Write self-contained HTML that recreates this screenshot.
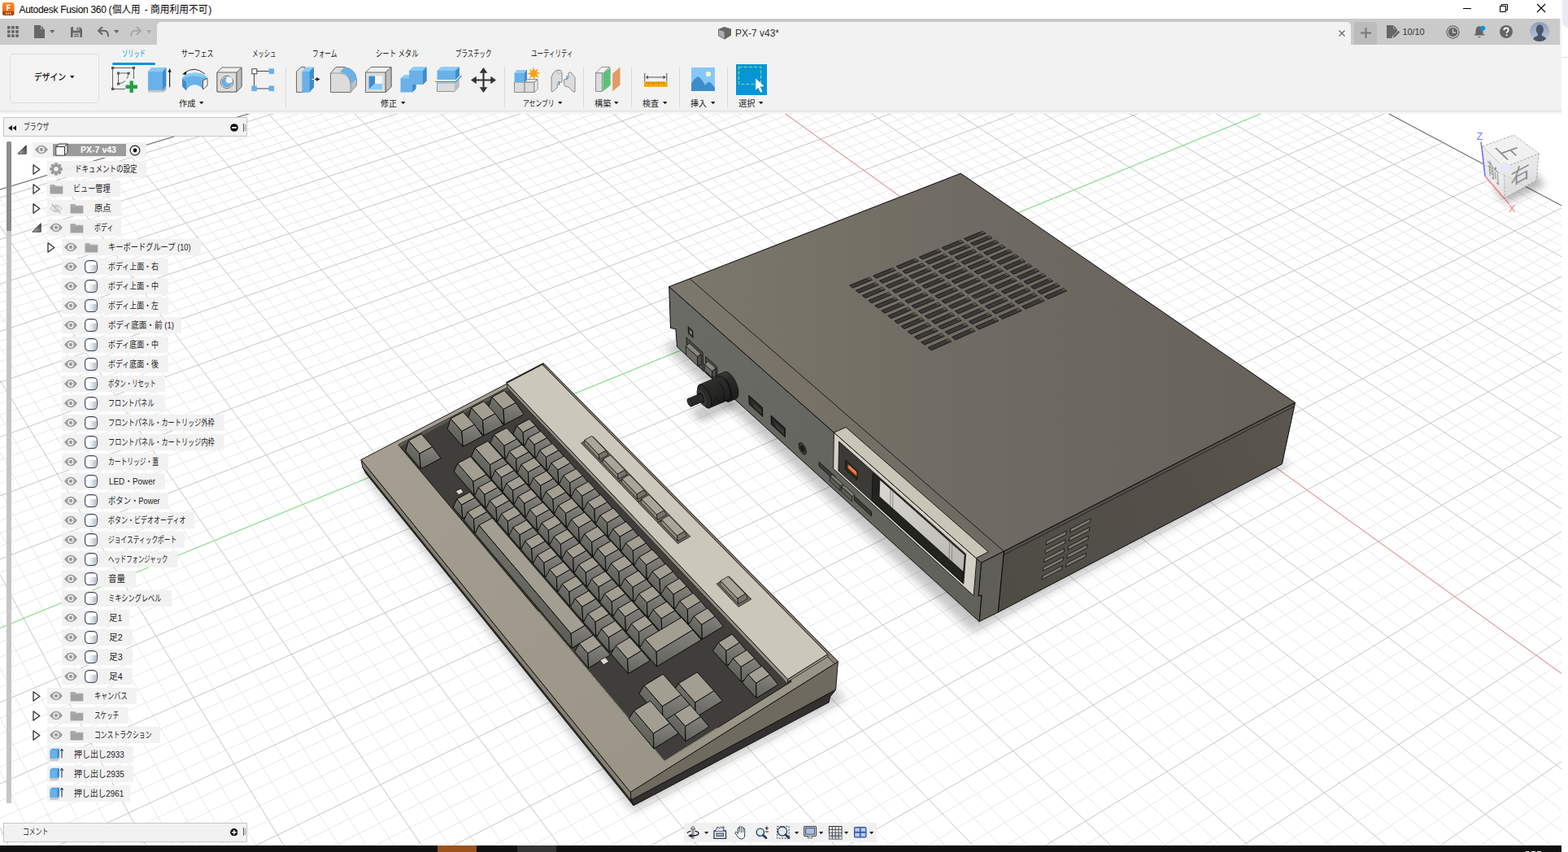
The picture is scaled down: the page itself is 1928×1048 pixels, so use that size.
<!DOCTYPE html><html lang="ja"><head><meta charset="utf-8"><title>Autodesk Fusion 360</title><style>
*{box-sizing:border-box}
html,body{margin:0;padding:0}
body{width:1928px;height:1048px;position:relative;overflow:hidden;background:#fff;font-family:"Liberation Sans","Noto Sans CJK JP",sans-serif;font-size:12px;color:#222}
#app div,#app svg,#app span{position:absolute}
#app{position:absolute;left:0;top:0;width:1928px;height:1048px;overflow:hidden}
.t{white-space:nowrap;line-height:1}
.row{background:rgba(241,241,241,.93)}
.sep{width:1px;background:#d9d9d9}
svg.tx{overflow:visible}
svg.tx text, svg text.cj{font-family:"Liberation Sans","Noto Sans CJK JP",sans-serif}
</style></head><body><div id="app"><div style="left:0px;top:0px;width:1920px;height:23px;background:#fff"></div><svg style="left:3px;top:3px" width="14.5" height="16" viewBox="0 0 14.5 16"><defs><linearGradient id="gfi" x1="0" y1="0" x2="0" y2="1"><stop offset="0" stop-color="#ff8a2b"/><stop offset="1" stop-color="#f26a16"/></linearGradient></defs><path d="M2.5 0 H11.5 Q14.5 0 14.5 3 V11 H0 V2.5 Q0 0 2.5 0Z" fill="url(#gfi)"/><path d="M0 11 H14.5 V14 Q14.5 16 12.5 16 H2 Q0 16 0 14Z" fill="#a4480f"/><path d="M5 2.8 H9.8 V4.3 H6.8 V6 H9.3 V7.5 H6.8 V10 H5Z" fill="#fff"/><path d="M4 12.6h1.6v1.8H4z M6.5 12.6h1.6v1.8H6.5z M9 12.6h1.6v1.8H9z" fill="#f5c9a8"/></svg><span class="t" style="left:23.5px;top:5.8px;font-size:12px;color:#000;letter-spacing:-0.3px" id="ttl">Autodesk Fusion 360</span><span class="t" style="left:133.6px;top:5.8px;font-size:12px;color:#000" id="ttl2">(</span><svg class="tx" style="left:138.3px;top:2.3px" width="37" height="20" fill="#000"><text x="0" y="14" font-size="12" textLength="34.5" lengthAdjust="spacingAndGlyphs">個人用</text></svg><span class="t" style="left:177.7px;top:5.8px;font-size:12px;color:#000">-</span><svg class="tx" style="left:185.2px;top:2.3px" width="73" height="20" fill="#000"><text x="0" y="14" font-size="12" textLength="70.4" lengthAdjust="spacingAndGlyphs">商用利用不可</text></svg><span class="t" style="left:256.3px;top:5.8px;font-size:12px;color:#000">)</span><svg style="left:1798px;top:4px" width="12" height="12" viewBox="0 0 12 12"><path d="M1 6.5H11" stroke="#000" stroke-width="1"/></svg><svg style="left:1843px;top:4px" width="12" height="12" viewBox="0 0 12 12"><path d="M1.5 3.5H8.5V10.5H1.5Z M3.5 3.5V1.5H10.5V8.5H8.5" fill="none" stroke="#000" stroke-width="1"/></svg><svg style="left:1889px;top:4px" width="12" height="12" viewBox="0 0 12 12"><path d="M1 1L11 11M11 1L1 11" stroke="#000" stroke-width="1.1"/></svg><div style="left:0px;top:23px;width:1918px;height:32px;background:#cacaca"></div><div style="left:1918px;top:23px;width:2px;height:32px;background:#f0f0f0"></div><div style="left:193px;top:27px;width:1468px;height:28px;background:#f2f2f2;border-radius:5px 5px 0 0"></div><svg style="left:9px;top:32px" width="14" height="14" viewBox="0 0 14 14"><rect x="0" y="0" width="3.6" height="3.6" fill="#666"/><rect x="0" y="5.1" width="3.6" height="3.6" fill="#666"/><rect x="0" y="10.2" width="3.6" height="3.6" fill="#666"/><rect x="5.1" y="0" width="3.6" height="3.6" fill="#666"/><rect x="5.1" y="5.1" width="3.6" height="3.6" fill="#666"/><rect x="5.1" y="10.2" width="3.6" height="3.6" fill="#666"/><rect x="10.2" y="0" width="3.6" height="3.6" fill="#666"/><rect x="10.2" y="5.1" width="3.6" height="3.6" fill="#666"/><rect x="10.2" y="10.2" width="3.6" height="3.6" fill="#666"/></svg><svg style="left:42px;top:31px" width="13" height="16" viewBox="0 0 13 16"><path d="M0 0H8L13 5V16H0Z" fill="#666"/><path d="M8 0V5H13" fill="#cacaca"/><path d="M8.6 0.8V4.4H12.2Z" fill="#666"/></svg><svg style="left:61px;top:36.5px" width="6.5" height="4" viewBox="0 0 6.5 4"><path d="M0 0H6.5 L3.25 4 Z" fill="#666"/></svg><svg style="left:87px;top:32.5px" width="14" height="13.5" viewBox="0 0 14 13.5"><path d="M0 1.5Q0 0 1.5 0H11L14 3V12Q14 13.5 12.5 13.5H1.5Q0 13.5 0 12Z" fill="#666"/><rect x="3" y="0" width="7.5" height="4.6" fill="#cacaca"/><rect x="7.6" y="0.7" width="1.8" height="3.2" fill="#666"/><rect x="2.6" y="7.4" width="8.8" height="6.1" fill="#cacaca"/><rect x="4" y="8.8" width="6" height="1.2" fill="#666"/><rect x="4" y="11" width="6" height="1.2" fill="#666"/></svg><svg style="left:119.5px;top:32.5px" width="14" height="12.5" viewBox="0 0 14 12.5"><path d="M5.5 0.5 L1 4.8 L5.5 9" fill="none" stroke="#666" stroke-width="1.9" stroke-linejoin="round" stroke-linecap="round"/><path d="M1.5 4.8 H8 Q13 4.8 13 11.5" fill="none" stroke="#666" stroke-width="1.9" stroke-linecap="round"/></svg><svg style="left:140px;top:36.5px" width="6.5" height="4" viewBox="0 0 6.5 4"><path d="M0 0H6.5 L3.25 4 Z" fill="#666"/></svg><svg style="left:159.5px;top:32.5px" width="14" height="12.5" viewBox="0 0 14 12.5"><path d="M8.5 0.5 L13 4.8 L8.5 9" fill="none" stroke="#a6a6a6" stroke-width="1.9" stroke-linejoin="round" stroke-linecap="round"/><path d="M12.5 4.8 H6 Q1 4.8 1 11.5" fill="none" stroke="#a6a6a6" stroke-width="1.9" stroke-linecap="round"/></svg><svg style="left:179.5px;top:36.5px" width="6.5" height="4" viewBox="0 0 6.5 4"><path d="M0 0H6.5 L3.25 4 Z" fill="#a6a6a6"/></svg><svg style="left:883px;top:33px" width="16" height="15.5" viewBox="0 0 16 15.5"><path d="M0 3 L7.5 0 L16 2.5 V10.5 L8 15.5 L0 11Z" fill="#666"/><path d="M0.8 3.8 L7.6 6 V14.2 L0.8 10.5Z" fill="#aeaeae"/></svg><span class="t" id="doct" style="left:904px;top:35px;font-size:12px;color:#333">PX-7 v43*</span><svg style="left:1646px;top:37px" width="8" height="8" viewBox="0 0 8 8"><path d="M0.5 0.5L7.5 7.5M7.5 0.5L0.5 7.5" stroke="#666" stroke-width="1.2"/></svg><div style="left:1665px;top:27px;width:28px;height:28px;background:#bcbcbc;border-radius:4px 4px 0 0"></div><svg style="left:1673px;top:34px" width="13" height="13" viewBox="0 0 13 13"><path d="M6.5 0V13M0 6.5H13" stroke="#777" stroke-width="2"/></svg><svg style="left:1705px;top:31px" width="17" height="16" viewBox="0 0 17 16"><path d="M0 0H8.5L13 4.5V7.5L6.5 14.2V16H0Z" fill="#666"/><path d="M8.5 0V4.5H13" fill="#cacaca"/><path d="M9.2 0.9V3.9H12.2Z" fill="#666"/><path d="M7.6 15.8 L8.3 12.6 L14.4 6.4 L16.6 8.6 L10.5 14.8Z" fill="#666" stroke="#cacaca" stroke-width="0.6"/></svg><span class="t" id="jobs" style="left:1724.5px;top:34px;font-size:11px;color:#333;letter-spacing:-0.1px">10/10</span><svg style="left:1777.5px;top:30.5px" width="17" height="17" viewBox="0 0 17 17"><circle cx="8.5" cy="8.5" r="7.6" fill="none" stroke="#666" stroke-width="1.1"/><circle cx="8.5" cy="8.5" r="5.8" fill="#666"/><path d="M8.5 4.5V9H12" fill="none" stroke="#cacaca" stroke-width="1.3"/></svg><svg style="left:1812px;top:31px" width="15" height="16.5" viewBox="0 0 15 16.5"><path d="M7 1.2 Q11.5 1.8 11.5 7 V10 L13.8 12.6 H0.2 L2.5 10 V7 Q2.5 1.8 7 1.2Z" fill="#666"/><path d="M5 14 H9 Q7 16.5 5 14Z" fill="#666"/><circle cx="11.2" cy="3.8" r="3" fill="#0696d7"/></svg><svg style="left:1844px;top:31px" width="16" height="16" viewBox="0 0 16 16"><circle cx="8" cy="8" r="8" fill="#666"/><path d="M5.3 6.2 Q5.3 3.4 8 3.4 Q10.7 3.4 10.7 5.9 Q10.7 7.3 9.2 8.2 Q8.6 8.6 8.6 9.8" fill="none" stroke="#fff" stroke-width="1.7"/><circle cx="8.6" cy="12.2" r="1.05" fill="#fff"/></svg><svg style="left:1881px;top:27px" width="24" height="24" viewBox="0 0 24 24"><defs><linearGradient id="gav" x1="0" y1="0" x2="0" y2="1"><stop offset="0" stop-color="#8c9ebb"/><stop offset="1" stop-color="#bcc8da"/></linearGradient><clipPath id="cav"><circle cx="12" cy="12" r="12"/></clipPath></defs><circle cx="12" cy="12" r="12" fill="url(#gav)"/><g clip-path="url(#cav)" fill="#4a5568"><ellipse cx="12.3" cy="9.2" rx="4.6" ry="6"/><path d="M9.8 13 H14.8 V17 Q20 18 21.5 24 H2.5 Q4.5 18 9.8 17Z"/></g></svg><div style="left:0px;top:55px;width:1920px;height:82px;background:#f2f2f2"></div><div style="left:12px;top:65.5px;width:109.5px;height:61px;border:1px solid #dcdcdc;border-radius:5px;background:#f3f3f3"></div><svg class="tx" style="left:42px;top:86.3px" width="42" height="19" fill="#111"><text x="0" y="13" font-size="11.5" font-weight="500" textLength="39" lengthAdjust="spacingAndGlyphs">デザイン</text></svg><svg style="left:86px;top:93px" width="5.5" height="3.5" viewBox="0 0 5.5 3.5"><path d="M0 0H5.5 L2.75 3.5 Z" fill="#222"/></svg><svg class="tx" style="left:149.6px;top:57.3px" width="31" height="18" fill="#0c94d6"><text x="0" y="13" font-size="11" textLength="28.8" lengthAdjust="spacingAndGlyphs">ソリッド</text></svg><div style="left:138.2px;top:76.6px;width:52.4px;height:3px;background:#0696d7;border-radius:1.5px"></div><svg class="tx" style="left:222.8px;top:57.3px" width="42" height="18" fill="#222"><text x="0" y="13" font-size="11" textLength="39.5" lengthAdjust="spacingAndGlyphs">サーフェス</text></svg><svg class="tx" style="left:310px;top:57.3px" width="32" height="18" fill="#222"><text x="0" y="13" font-size="11" textLength="29.5" lengthAdjust="spacingAndGlyphs">メッシュ</text></svg><svg class="tx" style="left:383.6px;top:57.3px" width="33" height="18" fill="#222"><text x="0" y="13" font-size="11" textLength="30.5" lengthAdjust="spacingAndGlyphs">フォーム</text></svg><svg class="tx" style="left:461.6px;top:57.3px" width="55" height="18" fill="#222"><text x="0" y="13" font-size="11" textLength="52.5" lengthAdjust="spacingAndGlyphs">シート メタル</text></svg><svg class="tx" style="left:559.7px;top:57.3px" width="47" height="18" fill="#222"><text x="0" y="13" font-size="11" textLength="44.5" lengthAdjust="spacingAndGlyphs">プラスチック</text></svg><svg class="tx" style="left:653px;top:57.3px" width="54" height="18" fill="#222"><text x="0" y="13" font-size="11" textLength="51.5" lengthAdjust="spacingAndGlyphs">ユーティリティ</text></svg><svg style="left:137px;top:82px" width="32" height="32" viewBox="0 0 32 32"><rect x="1.5" y="1.5" width="26" height="26" fill="none" stroke="#555" stroke-width="0.9"/><g fill="#555"><rect x="0" y="0" width="3.2" height="3.2"/><rect x="25.8" y="0" width="3.2" height="3.2"/><rect x="0" y="25.8" width="3.2" height="3.2"/></g><path d="M8.5 8 H21 Q20 20 8.5 21 Z" fill="none" stroke="#555" stroke-width="0.9"/><g fill="#555"><rect x="7" y="6.6" width="3" height="3"/><rect x="19.6" y="6.6" width="3" height="3"/><rect x="7" y="19.6" width="3" height="3"/></g><rect x="17" y="15" width="15" height="17" fill="#f2f2f2"/><path d="M22.5 17.5 h4.4 v5 h5 v4.4 h-5 v5 h-4.4 v-5 h-5 v-4.4 h5z" fill="#23a045"/></svg><svg style="left:181px;top:82px" width="31" height="32" viewBox="0 0 32 32"><path d="M1 28 L5 24.5 H24 V28.5 L20 32 H1Z" fill="#c4c4c4"/><path d="M20 28.5 L24 24.5 V28.5 L20 32Z" fill="#a9a9a9"/><path d="M1 6 L5.5 0.5 H24 V24 L19.5 29 H1Z" fill="#69b1e8"/><path d="M1 6 H19.5 V29 H1Z" fill="#69b1e8"/><path d="M19.5 6 L24 0.5 V24 L19.5 29Z" fill="#3f8ccb"/><path d="M1 6 L5.5 0.5 H24 L19.5 6Z" fill="#8accf7"/><path d="M28.5 4 V25.5" stroke="#222" stroke-width="1.2"/><path d="M26.3 6.5 L28.5 1.5 L30.7 6.5Z" fill="#222"/></svg><svg style="left:222.5px;top:83.5px" width="33" height="28" viewBox="0 0 33 28"><path d="M3 6 Q16 -4 29 7" fill="none" stroke="#333" stroke-width="1"/><path d="M1 7.5 L6.5 3.5 L6 8Z" fill="#222"/><path d="M1 13 Q3 6 16 5.5 Q29 6 32 12 L27 26 Q21 19 14 20.5 Q8 22 6 27.5 L1 22Z" fill="#69b1e8"/><path d="M1 13 Q9 9 16 9.5 Q24 10 32 12 Q29 6 16 5.5 Q3 6 1 13Z" fill="#8accf7"/><path d="M1 13 L1 22 L6 27.5 L6 17Z" fill="#3f8ccb"/><path d="M26.5 15 L32 12.5 V21 L26.5 26Z" fill="#fff" stroke="#555" stroke-width="1" stroke-linejoin="round"/></svg><svg style="left:266px;top:82px" width="32" height="32" viewBox="0 0 32 32"><path d="M1 7 L7 1 H31 V25 L25 31 H1Z" fill="#f0f0f0" stroke="#6a6a6a" stroke-width="1" stroke-linejoin="round"/><path d="M1 7 H25 V31 H1Z" fill="#dcdcdc" stroke="#6a6a6a" stroke-width="1"/><path d="M25 7 L31 1 V25 L25 31Z" fill="#bdbdbd" stroke="#6a6a6a" stroke-width="1" stroke-linejoin="round"/><circle cx="13" cy="19" r="7.6" fill="#f4f4f4" stroke="#6a6a6a" stroke-width="1"/><circle cx="13" cy="19" r="5.8" fill="#69b1e8" stroke="#3f78ae" stroke-width="0.8"/><circle cx="15.6" cy="16.4" r="3.9" fill="#eef6fc"/></svg><svg style="left:309px;top:84px" width="28.5" height="28.5" viewBox="0 0 28.5 28.5"><path d="M3.5 5 V25 M3.5 3.5 H25 M3.5 25 H25" stroke="#444" stroke-width="1" fill="none"/><rect x="0.8" y="0.8" width="6" height="6" fill="#fff" stroke="#444" stroke-width="1"/><rect x="21.5" y="0.3" width="6.6" height="6.6" fill="#69b1e8"/><rect x="0.3" y="21.5" width="6.6" height="6.6" fill="#69b1e8"/><rect x="21.5" y="21.5" width="6.6" height="6.6" fill="#69b1e8"/></svg><svg style="left:364px;top:82px" width="30" height="32" viewBox="0 0 30 32"><path d="M0.5 6 L6 0.5 H11 V31.5 H0.5Z" fill="#dcdcdc" stroke="#6a6a6a" stroke-width="1" stroke-linejoin="round"/><path d="M7.5 6 L13 0.5 H22 V25.5 L16.5 31.5 H7.5Z" fill="#8accf7"/><path d="M7.5 6 H16.5 V31.5 H7.5Z" fill="#69b1e8"/><path d="M16.5 6 L22 0.5 V25.5 L16.5 31.5Z" fill="#3f8ccb"/><path d="M20 15.5 H27" stroke="#222" stroke-width="1.2"/><path d="M25 13 L29.5 15.5 L25 18Z" fill="#222"/><path d="M19.5 15.5H23" stroke="#fff" stroke-width="1.2"/></svg><svg style="left:405.5px;top:82px" width="33" height="32" viewBox="0 0 33 32"><path d="M0.5 8 L7 0.5 H17 Q32 3 32.5 17 V23 L25 31.5 H0.5Z" fill="#dcdcdc" stroke="#6a6a6a" stroke-width="1" stroke-linejoin="round"/><path d="M25 31.5 L32.5 23 V17 L25 22Z" fill="#bdbdbd"/><path d="M12 7 Q24 8 25 22 L32.5 15.5 Q31 2 17.5 0.5Z" fill="#69b1e8"/><path d="M0.5 8 H12 Q24 8.5 25 22 V31.5" fill="none" stroke="#8a8a8a" stroke-width="0.8"/></svg><svg style="left:449px;top:82px" width="32.5" height="32" viewBox="0 0 32.5 32"><path d="M0.5 7 L7 0.5 H32 V25 L25 31.5 H0.5Z" fill="#f0f0f0" stroke="#6a6a6a" stroke-width="1" stroke-linejoin="round"/><path d="M25 7 L32 0.5 V25 L25 31.5Z" fill="#bdbdbd" stroke="#6a6a6a" stroke-width="1" stroke-linejoin="round"/><path d="M0.5 7 H25 V31.5 H0.5Z" fill="#dcdcdc" stroke="#6a6a6a" stroke-width="1"/><rect x="4.5" y="11.5" width="16.5" height="16.5" fill="#f6f6f6"/><path d="M4.5 11.5 H12 V21 L4.5 28Z" fill="#3f8ccb"/><path d="M12 21 H21 V28 H4.5Z" fill="#8accf7"/></svg><svg style="left:491.5px;top:82px" width="33" height="32" viewBox="0 0 33 32"><path d="M11 5 L16 0.5 H32.5 V17.5 L28 22 H19.5 V27 L15 31.5 H0.5 V14.5 L5 10.5 H11Z" fill="#69b1e8"/><path d="M11 5 L16 0.5 H32.5 L28 5Z" fill="#8accf7"/><path d="M0.5 14.5 L5 10.5 H11 V14.5Z" fill="#8accf7"/><path d="M28 5 L32.5 0.5 V17.5 L28 22Z" fill="#3f8ccb"/><path d="M15 22 H19.5 V27 L15 31.5Z" fill="#3f8ccb"/></svg><svg style="left:535px;top:82px" width="33" height="31" viewBox="0 0 33 31"><path d="M2.5 20 H24 L29 15.5 V25 L24 30.5 H2.5Z" fill="#dcdcdc" stroke="#8a8a8a" stroke-width="0.9" stroke-linejoin="round"/><path d="M24 20 L29 15.5 V25 L24 30.5Z" fill="#bdbdbd"/><path d="M2.5 5 L7.5 0.5 H30 V11 L25 16 H2.5Z" fill="#69b1e8"/><path d="M2.5 5 L7.5 0.5 H30 L25 5Z" fill="#8accf7"/><path d="M25 5 L30 0.5 V11 L25 16Z" fill="#3f8ccb"/><path d="M0 18.5 H25.5 L32.5 11" fill="none" stroke="#2b8fe0" stroke-width="1.1"/></svg><svg style="left:578.5px;top:82.5px" width="31" height="31" viewBox="0 0 32 32"><path d="M16 3 V29 M3 16 H29" stroke="#333" stroke-width="2.2"/><path d="M16 0 L21 7 H11Z M16 32 L21 25 H11Z M0 16 L7 11 V21Z M32 16 L25 11 V21Z" fill="#333"/></svg><svg style="left:632px;top:82px" width="33" height="32" viewBox="0 0 33 32"><path d="M0.5 19 H13 V31.5 H0.5Z" fill="#dcdcdc" stroke="#8a8a8a" stroke-width="1"/><path d="M13 19 H25 V31.5 H13Z" fill="#dcdcdc" stroke="#8a8a8a" stroke-width="1"/><path d="M13 19 L17 15.5 H29 L25 19Z M25 19 L29 15.5 V27.5 L25 31.5Z" fill="#f0f0f0" stroke="#8a8a8a" stroke-width="1" stroke-linejoin="round"/><path d="M0.5 8 L4 4 H16 V15.5 L13 19 H0.5Z" fill="#69b1e8"/><path d="M0.5 8 L4 4 H16 L13 8Z" fill="#8accf7"/><path d="M13 8 L16 4 V15.5 L13 19Z" fill="#3f8ccb"/><path d="M24 0 L25.6 5 L30 2.2 L27.8 6.8 L32.8 7.8 L28 9.6 L30.8 13.8 L26 11.8 L24.8 16.8 L23.2 12 L18.8 14.5 L21 10 L16 8.5 L21 7 L18.5 2.8 L22.8 5Z" fill="#f5a30e"/></svg><svg style="left:676.5px;top:84px" width="31" height="30" viewBox="0 0 31 30"><path d="M1 11 Q4 2 10 2 Q14 2 14 6 V17 L9 17.5 L8 24 L2 29 Q0.5 29 1 26Z" fill="#dcdcdc" stroke="#8a8a8a" stroke-width="1" stroke-linejoin="round"/><ellipse cx="11" cy="4.5" rx="2.6" ry="1.6" fill="#f8f8f8" stroke="#8a8a8a" stroke-width="0.7"/><path d="M22 6 Q23 4 25 5 L30 11 V28 Q30 30 28 29 L22 23 L18 22 Q16 21 16.5 14 L22 12Z" fill="#dcdcdc" stroke="#8a8a8a" stroke-width="1" stroke-linejoin="round"/><path d="M10.5 16 V21 M20 9 V14" stroke="#1e90e6" stroke-width="1.1"/></svg><svg style="left:732px;top:82px" width="31" height="31" viewBox="0 0 31.5 31.5"><path d="M0.5 8 L8 0.5 H18 L10 8Z" fill="#f4f4f4" stroke="#8a8a8a" stroke-width="1" stroke-linejoin="round"/><path d="M0.5 8 H8.5 V31 H0.5Z" fill="#dcdcdc" stroke="#8a8a8a" stroke-width="1"/><path d="M9.5 9 L19 1 V23 L9.5 31Z" fill="#58c17c"/><path d="M21.5 9 L31 0.5 V22.5 L21.5 31Z" fill="#e39a65"/></svg><svg style="left:792px;top:89.5px" width="28.5" height="17" viewBox="0 0 28.5 17"><path d="M0.7 0 V10 M27.8 0 V10" stroke="#555" stroke-width="1"/><path d="M3 5 H26" stroke="#555" stroke-width="1"/><path d="M1.5 5 L5 2.8 V7.2Z M27 5 L23.5 2.8 V7.2Z" fill="#555"/><rect x="0" y="10.5" width="28.5" height="6.3" fill="#f7a400"/><path d="M3 10.5v2 M6 10.5v3 M9 10.5v2 M12 10.5v3 M15 10.5v2 M18 10.5v3 M21 10.5v2 M24 10.5v3" stroke="#a86a00" stroke-width="0.8"/></svg><svg style="left:850px;top:83px" width="29" height="29" viewBox="0 0 29 29"><rect x="0" y="0" width="29" height="29" fill="#86c8f7"/><circle cx="21" cy="8" r="3.1" fill="#fbf7c2"/><path d="M0 20 Q7 8 11 13 Q14 16 17 22 Q21 16 24 19 Q27 22 29 25 V29 H0Z" fill="#3f8ccb"/></svg><svg style="left:905px;top:79px" width="38" height="38" viewBox="0 0 38 38"><rect x="0" y="0" width="38" height="38" fill="#0696d7"/><rect x="3.5" y="3.5" width="27" height="21" fill="none" stroke="#86e08a" stroke-width="1.1" stroke-dasharray="4 2.2"/><path d="M24.2 17.5 L34.5 27 L29.7 27.7 L32.5 33.5 L30 34.7 L27.2 28.8 L24.2 31.8Z" fill="#fff"/></svg><div class="sep" style="left:351px;top:82px;width:1px;height:50px;"></div><div class="sep" style="left:620px;top:82px;width:1px;height:50px;"></div><div class="sep" style="left:717px;top:82px;width:1px;height:50px;"></div><div class="sep" style="left:776px;top:82px;width:1px;height:50px;"></div><div class="sep" style="left:835px;top:82px;width:1px;height:50px;"></div><div class="sep" style="left:894px;top:82px;width:1px;height:50px;"></div><svg class="tx" style="left:220px;top:118.6px" width="23" height="17" fill="#222"><text x="0" y="12" font-size="10.5" textLength="20.5" lengthAdjust="spacingAndGlyphs">作成</text></svg><svg style="left:244.5px;top:124.7px" width="5.5" height="3.3" viewBox="0 0 5.5 3.3"><path d="M0 0H5.5 L2.75 3.3 Z" fill="#222"/></svg><svg class="tx" style="left:468px;top:118.6px" width="23" height="17" fill="#222"><text x="0" y="12" font-size="10.5" textLength="20" lengthAdjust="spacingAndGlyphs">修正</text></svg><svg style="left:492.5px;top:124.7px" width="5.5" height="3.3" viewBox="0 0 5.5 3.3"><path d="M0 0H5.5 L2.75 3.3 Z" fill="#222"/></svg><svg class="tx" style="left:643px;top:118.6px" width="41" height="17" fill="#222"><text x="0" y="12" font-size="10.5" textLength="38.5" lengthAdjust="spacingAndGlyphs">アセンブリ</text></svg><svg style="left:685.5px;top:124.7px" width="5.5" height="3.3" viewBox="0 0 5.5 3.3"><path d="M0 0H5.5 L2.75 3.3 Z" fill="#222"/></svg><svg class="tx" style="left:731px;top:118.6px" width="23" height="17" fill="#222"><text x="0" y="12" font-size="10.5" textLength="20.5" lengthAdjust="spacingAndGlyphs">構築</text></svg><svg style="left:755px;top:124.7px" width="5.5" height="3.3" viewBox="0 0 5.5 3.3"><path d="M0 0H5.5 L2.75 3.3 Z" fill="#222"/></svg><svg class="tx" style="left:790px;top:118.6px" width="23" height="17" fill="#222"><text x="0" y="12" font-size="10.5" textLength="20" lengthAdjust="spacingAndGlyphs">検査</text></svg><svg style="left:814.5px;top:124.7px" width="5.5" height="3.3" viewBox="0 0 5.5 3.3"><path d="M0 0H5.5 L2.75 3.3 Z" fill="#222"/></svg><svg class="tx" style="left:849px;top:118.6px" width="23" height="17" fill="#222"><text x="0" y="12" font-size="10.5" textLength="20" lengthAdjust="spacingAndGlyphs">挿入</text></svg><svg style="left:873.5px;top:124.7px" width="5.5" height="3.3" viewBox="0 0 5.5 3.3"><path d="M0 0H5.5 L2.75 3.3 Z" fill="#222"/></svg><svg class="tx" style="left:907.5px;top:118.6px" width="23" height="17" fill="#222"><text x="0" y="12" font-size="10.5" textLength="20.5" lengthAdjust="spacingAndGlyphs">選択</text></svg><svg style="left:932.5px;top:124.7px" width="5.5" height="3.3" viewBox="0 0 5.5 3.3"><path d="M0 0H5.5 L2.75 3.3 Z" fill="#222"/></svg><svg width="1920" height="904" viewBox="0 137 1920 904" style="position:absolute;left:0;top:137px;display:block" shape-rendering="geometricPrecision"><defs><linearGradient id="gtop" gradientUnits="userSpaceOnUse" x1="830" y1="420" x2="1560" y2="420"><stop offset="0" stop-color="#7d786d"/><stop offset="0.45" stop-color="#706c63"/><stop offset="1" stop-color="#67635b"/></linearGradient><linearGradient id="gright" gradientUnits="userSpaceOnUse" x1="1230" y1="700" x2="1590" y2="520"><stop offset="0" stop-color="#4f4c46"/><stop offset="0.6" stop-color="#545049"/><stop offset="1" stop-color="#5a564e"/></linearGradient><linearGradient id="gfront" gradientUnits="userSpaceOnUse" x1="823" y1="380" x2="1200" y2="720"><stop offset="0" stop-color="#6b6b66"/><stop offset="1" stop-color="#61615c"/></linearGradient><linearGradient id="gflap" gradientUnits="userSpaceOnUse" x1="1082" y1="600" x2="1186" y2="700"><stop offset="0" stop-color="#d6d5cf"/><stop offset="1" stop-color="#b9b8b0"/></linearGradient><linearGradient id="gknob" gradientUnits="userSpaceOnUse" x1="870" y1="455" x2="885" y2="500"><stop offset="0" stop-color="#4a4a49"/><stop offset="0.35" stop-color="#2c2c2b"/><stop offset="1" stop-color="#1b1b1b"/></linearGradient><linearGradient id="gkf" x1="0.6" y1="0" x2="0.3" y2="1"><stop offset="0" stop-color="#75756f"/><stop offset="1" stop-color="#585854"/></linearGradient><linearGradient id="gkr" x1="0.5" y1="0" x2="0.4" y2="1"><stop offset="0" stop-color="#84837d"/><stop offset="1" stop-color="#63635e"/></linearGradient><linearGradient id="gpalm" gradientUnits="userSpaceOnUse" x1="450" y1="580" x2="790" y2="960"><stop offset="0" stop-color="#a49e90"/><stop offset="1" stop-color="#9b9587"/></linearGradient><filter id="blur8" x="-20%" y="-20%" width="140%" height="140%"><feGaussianBlur stdDeviation="6"/></filter><filter id="blur4" x="-30%" y="-30%" width="160%" height="160%"><feGaussianBlur stdDeviation="4"/></filter></defs><rect x="0" y="137" width="1920" height="904" fill="#fff"/><path d="M-407 357.3L413.5 2345.3M-385.5 350.8L452.9 2315M-364.2 344.3L491.6 2285.2M-343.1 337.9L529.7 2255.9M-301.3 325.1L604.2 2198.7M-280.6 318.8L640.5 2170.7M-260.1 312.5L676.2 2143.2M-239.8 306.3L711.5 2116.1M-199.5 294L780.3 2063.2M-179.6 288L813.9 2037.4M-159.8 281.9L847 2011.9M-140.2 276L879.7 1986.8M-101.3 264.1L943.5 1937.7M-82.1 258.3L974.7 1913.7M-63.1 252.4L1005.5 1890M-44.1 246.7L1035.8 1866.7M-6.7 235.2L1095.2 1821M11.9 229.6L1124.2 1798.7M30.3 224L1152.9 1776.7M48.5 218.4L1181.1 1754.9M84.7 207.4L1236.5 1712.3M102.6 201.9L1263.6 1691.5M120.3 196.5L1290.4 1670.9M138 191.1L1316.8 1650.6M172.9 180.5L1368.5 1610.8M190.2 175.2L1393.9 1591.3M207.4 170L1418.9 1572.1M224.4 164.8L1443.6 1553.1M258.2 154.5L1492.1 1515.8M274.9 149.4L1515.8 1497.5M291.5 144.3L1539.3 1479.5M308 139.3L1562.5 1461.6M340.6 129.3L1608 1426.6M356.8 124.4L1630.3 1409.5M372.8 119.5L1652.4 1392.5M388.8 114.6L1674.2 1375.8M420.4 105L1716.9 1342.9M436 100.2L1738 1326.7M451.6 95.5L1758.7 1310.7M467 90.8L1779.2 1295M497.6 81.4L1819.6 1263.9M512.7 76.8L1839.4 1248.7M527.8 72.2L1858.9 1233.7M542.7 67.7L1878.3 1218.8M572.3 58.6L1916.3 1189.5M587 54.2L1935 1175.1M601.6 49.7L1953.5 1160.9M616.1 45.3L1971.8 1146.8M644.8 36.6L2007.8 1119.2M659 32.2L2025.5 1105.6M673.1 27.9L2043 1092.1M687.2 23.6L2060.3 1078.8M715 15.1L2094.4 1052.6M728.8 10.9L2111.1 1039.7M742.5 6.8L2127.7 1027M756.1 2.6L2144.1 1014.4M783.1 -5.6L2176.4 989.5M796.5 -9.7L2192.3 977.3M809.8 -13.8L2208 965.2M823 -17.8L2223.6 953.2M849.2 -25.8L2254.3 929.6M862.2 -29.8L2269.4 918M875.1 -33.7L2284.3 906.5M887.9 -37.6L2299.1 895.1M913.3 -45.4L2328.2 872.7M925.9 -49.2L2342.6 861.7M938.5 -53L2356.8 850.7M950.9 -56.8L2370.9 839.9M975.6 -64.4L2398.7 818.6M987.9 -68.1L2412.3 808.1M1000.1 -71.8L2425.9 797.6M1012.2 -75.5L2439.3 787.3M1036.2 -82.8L2465.7 767M1048.1 -86.5L2478.8 757M1059.9 -90.1L2491.7 747M1071.7 -93.7L2504.5 737.2M1095 -100.8L2529.7 717.8M1106.6 -104.3L2542.2 708.2M1118.1 -107.8L2554.5 698.7M1129.5 -111.3L2566.7 689.3M1152.2 -118.2L2590.8 670.8M1163.5 -121.7L2602.7 661.6M1174.7 -125.1L2614.5 652.6M1185.8 -128.5L2626.2 643.6M-428.6 363.9L1196.9 -131.8M-421 383.1L1215.1 -122.1M-417.1 392.9L1224.4 -117.2M-413.2 402.7L1233.7 -112.2M-409.2 412.7L1243.1 -107.3M-401.1 433L1262.1 -97.1M-397 443.3L1271.7 -92M-392.8 453.7L1281.4 -86.9M-388.6 464.3L1291.2 -81.7M-380.1 485.8L1311 -71.1M-375.7 496.7L1321 -65.8M-371.3 507.7L1331.1 -60.4M-366.8 518.9L1341.3 -55M-357.8 541.7L1361.9 -44.1M-353.1 553.3L1372.3 -38.5M-348.4 565.1L1382.9 -32.9M-343.7 577L1393.5 -27.2M-334 601.2L1415 -15.8M-329.1 613.6L1425.9 -10M-324.1 626.1L1436.9 -4.2M-319.1 638.7L1448 1.7M-308.8 664.5L1470.4 13.7M-303.6 677.7L1481.8 19.7M-298.2 691L1493.3 25.9M-292.9 704.5L1504.9 32M-281.9 732.1L1528.3 44.5M-276.3 746.1L1540.2 50.8M-270.6 760.4L1552.2 57.2M-264.8 774.8L1564.4 63.7M-253.1 804.2L1588.9 76.7M-247.1 819.3L1601.4 83.3M-241 834.5L1613.9 90M-234.9 850L1626.6 96.8M-222.3 881.6L1652.3 110.5M-215.8 897.7L1665.4 117.4M-209.3 914.1L1678.5 124.4M-202.7 930.7L1691.8 131.5M-189.2 964.6L1718.8 145.8M-182.2 982L1732.5 153.1M-175.2 999.6L1746.3 160.4M-168.1 1017.5L1760.2 167.8M-153.5 1054.1L1788.5 182.9M-146 1072.8L1802.9 190.5M-138.4 1091.8L1817.4 198.2M-130.7 1111.1L1832 206M-115 1150.7L1861.7 221.9M-106.9 1170.9L1876.8 229.9M-98.7 1191.5L1892.1 238M-90.4 1212.4L1907.5 246.2M-73.3 1255.3L1938.7 262.8M-64.5 1277.3L1954.6 271.3M-55.6 1299.7L1970.7 279.8M-46.5 1322.4L1986.9 288.4M-27.9 1369.1L2019.9 306M-18.4 1393L2036.6 314.9M-8.7 1417.4L2053.5 323.9M1.2 1442.2L2070.6 333M21.5 1493.1L2105.4 351.5M32 1519.3L2123.1 360.9M42.6 1546L2140.9 370.4M53.4 1573.1L2159 380M75.7 1629L2195.7 399.5M87.2 1657.7L2214.4 409.5M98.8 1687L2233.3 419.5M110.7 1716.9L2252.4 429.7M135.3 1778.4L2291.3 450.4M147.9 1810.1L2311 460.9M160.8 1842.5L2331 471.5M174 1875.5L2351.3 482.3M201.1 1943.6L2392.5 504.2M215.1 1978.7L2413.4 515.4M229.4 2014.6L2434.6 526.6M244.1 2051.3L2456.1 538.1M274.3 2127.1L2499.9 561.3M289.9 2166.2L2522.1 573.2M305.8 2206.3L2544.7 585.2M322.2 2247.3L2567.5 597.3M356 2332.1L2614.1 622.1M373.5 2376L2637.8 634.7" stroke="#e8e8e8" stroke-width="1" fill="none"/>
<path d="M-428.6 363.9L373.5 2376M-322.1 331.5L567.2 2227M-219.5 300.2L746.1 2089.5M-120.7 270L911.8 1962.1M-25.3 240.9L1065.7 1843.7M66.7 212.9L1209 1733.5M155.5 185.8L1342.8 1630.6M241.4 159.6L1468 1534.3M324.4 134.3L1585.4 1444M404.6 109.8L1695.7 1359.2M482.3 86.1L1799.5 1279.4M557.6 63.1L1897.4 1204.1M630.5 40.9L1989.9 1132.9M701.1 19.4L2077.4 1065.6M769.6 -1.5L2160.3 1001.9M836.1 -21.8L2239 941.4M900.7 -41.5L2313.7 883.9M963.3 -60.6L2384.9 829.2M1024.2 -79.2L2452.6 777.1M1083.4 -97.2L2517.2 727.4M1140.9 -114.8L2578.8 680M1196.9 -131.8L2637.8 634.7M-424.8 373.5L1206 -127M-405.2 422.8L1252.5 -102.2M-384.4 475L1301 -76.4M-362.3 530.3L1351.5 -49.6M-338.9 589L1404.2 -21.5M-314 651.5L1459.2 7.7M-287.4 718.2L1516.6 38.2M-259 789.4L1576.6 70.2M-228.6 865.7L1639.4 103.6M-196 947.5L1705.2 138.6M-160.8 1035.7L1774.3 175.3M-122.9 1130.8L1846.8 213.9M-81.9 1233.7L1923 254.5M-37.3 1345.5L2003.3 297.2M11.3 1467.4L2087.9 342.2M64.5 1600.8L2177.2 389.7M122.9 1747.4L2271.7 440M187.4 1909.2L2371.7 493.2M259 2088.8L2477.9 549.6M338.9 2289.2L2590.6 609.6" stroke="#c6c6c6" stroke-width="1" fill="none"/>
<line x1="1196.9" y1="-131.8" x2="2637.8" y2="634.7" stroke="#777" stroke-width="1.2"/>
<line x1="-428.6" y1="363.9" x2="1196.9" y2="-131.8" stroke="#777" stroke-width="1.2"/>
<line x1="769.6" y1="-1.5" x2="2160.3" y2="1001.9" stroke="#f08a8a" stroke-width="1"/>
<line x1="-228.6" y1="865.7" x2="1639.4" y2="103.6" stroke="#7be87b" stroke-width="1"/><polygon points="815.4,426.1 1177.6,279.5 1586,571.8 1196.1,778.5" fill="#000" opacity="0.22" filter="url(#blur8)"/>
<polygon points="890.9,485.1 907.5,500.4 862.3,519.9 847,505.4" fill="#000" opacity="0.2" filter="url(#blur4)"/>
<polygon points="444.3,582.3 678.5,487.2 1040.3,860 778.6,998.7" fill="#000" opacity="0.2" filter="url(#blur8)"/><polygon points="1234.4,678 1592.5,495.3 1576.4,570.7 1227.2,753.1" fill="url(#gright)" stroke="#0a0a0a" stroke-width="1.0"/>
<line x1="1233.9" y1="682.7" x2="1591.6" y2="499.8" stroke="#1a1a1a" stroke-width="0.8"/>
<polygon points="1206.5,692.2 1234.4,678 1227.2,753.1 1204.1,764.5 1206.9,732.2 1203.1,733.3" fill="#5f5d57" stroke="#0a0a0a" stroke-width="1.0"/>
<polygon points="822.7,352.7 1206.5,692.2 1203.1,733.3 1206.9,732.2 1204.1,764.5 832.6,426.6 830.8,404.6 824.5,403.5" fill="url(#gfront)" stroke="#0a0a0a" stroke-width="1.0"/>
<polygon points="822.7,352.7 1181.3,213.3 1592.5,495.3 1206.5,692.2" fill="url(#gtop)" stroke="#0a0a0a" stroke-width="1.0"/>
<line x1="848.1" y1="342.8" x2="1234.4" y2="678" stroke="#111" stroke-width="0.9"/>
<path d="M1044.6 351.1L1068.8 341.2L1072.7 344.3L1048.6 354.2ZM1052.4 357.2L1076.5 347.3L1080.5 350.4L1056.3 360.4ZM1060.1 363.4L1084.4 353.4L1088.3 356.5L1064.1 366.5ZM1067.9 369.6L1092.2 359.5L1096.2 362.6L1071.9 372.8ZM1075.8 375.8L1100.1 365.7L1104.2 368.8L1079.8 379ZM1083.8 382.1L1108.1 371.9L1112.2 375.1L1087.8 385.3ZM1091.7 388.5L1116.1 378.1L1120.2 381.3L1095.8 391.7ZM1099.8 394.8L1124.2 384.5L1128.4 387.7L1103.9 398.1ZM1107.9 401.3L1132.4 390.8L1136.6 394.1L1112.1 404.6ZM1116.1 407.8L1140.6 397.2L1144.8 400.5L1120.3 411.1ZM1124.3 414.3L1148.9 403.7L1153.1 407L1128.5 417.6ZM1132.6 420.9L1157.2 410.2L1161.5 413.5L1136.8 424.2ZM1141 427.5L1165.6 416.7L1169.9 420L1145.2 430.9ZM1073.6 339.3L1097.4 329.5L1101.4 332.6L1077.5 342.3ZM1081.3 345.3L1105.2 335.5L1109.2 338.5L1085.3 348.4ZM1089.2 351.4L1113.1 341.5L1117.1 344.6L1093.2 354.5ZM1097 357.5L1121 347.5L1125 350.6L1101.1 360.6ZM1105 363.6L1128.9 353.6L1133 356.7L1109 366.8ZM1112.9 369.9L1137 359.8L1141.1 362.9L1117 373ZM1121 376.1L1145 365.9L1149.2 369.1L1125.1 379.3ZM1129.1 382.4L1153.2 372.2L1157.3 375.3L1133.2 385.6ZM1137.2 388.7L1161.4 378.4L1165.6 381.6L1141.4 392ZM1145.5 395.1L1169.6 384.7L1173.9 388L1149.7 398.4ZM1153.7 401.6L1178 391.1L1182.2 394.3L1158 404.8ZM1162.1 408L1186.3 397.5L1190.6 400.8L1166.3 411.3ZM1170.5 414.6L1194.8 403.9L1199.1 407.2L1174.8 417.9ZM1102.1 327.6L1125.6 318L1129.6 321L1106.1 330.6ZM1109.9 333.5L1133.5 323.9L1137.5 326.9L1113.9 336.6ZM1117.8 339.5L1141.4 329.8L1145.4 332.8L1121.8 342.6ZM1125.7 345.6L1149.3 335.7L1153.4 338.8L1129.8 348.6ZM1133.7 351.6L1157.3 341.7L1161.4 344.8L1137.8 354.7ZM1141.7 357.8L1165.4 347.8L1169.5 350.9L1145.8 360.9ZM1149.8 363.9L1173.5 353.9L1177.7 357L1154 367.1ZM1158 370.1L1181.7 360L1185.9 363.2L1162.1 373.3ZM1166.2 376.4L1190 366.2L1194.2 369.4L1170.4 379.6ZM1174.4 382.7L1198.3 372.4L1202.5 375.6L1178.7 385.9ZM1182.8 389L1206.6 378.7L1210.9 381.9L1187 392.2ZM1191.1 395.4L1215.1 385L1219.4 388.2L1195.4 398.7ZM1199.6 401.8L1223.5 391.4L1227.9 394.6L1203.9 405.1ZM1130.3 316.1L1153.5 306.6L1157.5 309.5L1134.3 319ZM1138.2 321.9L1161.4 312.4L1165.4 315.4L1142.2 324.9ZM1146.1 327.8L1169.3 318.2L1173.4 321.2L1150.1 330.9ZM1154 333.8L1177.3 324.1L1181.4 327.1L1158.1 336.8ZM1162 339.8L1185.4 330L1189.5 333.1L1166.1 342.8ZM1170.1 345.8L1193.5 336L1197.6 339L1174.2 348.9ZM1178.2 351.9L1201.6 342L1205.8 345.1L1182.4 355ZM1186.4 358L1209.9 348.1L1214.1 351.1L1190.6 361.1ZM1194.7 364.2L1218.2 354.1L1222.4 357.3L1198.9 367.3ZM1203 370.4L1226.5 360.3L1230.8 363.4L1207.2 373.6ZM1211.4 376.6L1234.9 366.5L1239.2 369.6L1215.6 379.8ZM1219.8 382.9L1243.4 372.7L1247.7 375.9L1224.1 386.1ZM1228.3 389.3L1251.9 379L1256.2 382.2L1232.6 392.5ZM1158.1 304.7L1180.9 295.4L1185 298.3L1162.1 307.6ZM1166 310.5L1188.9 301.1L1192.9 304L1170 313.4ZM1173.9 316.3L1196.9 306.8L1200.9 309.8L1178 319.3ZM1181.9 322.2L1204.9 312.6L1209 315.6L1186 325.2ZM1190 328.1L1213 318.5L1217.1 321.5L1194.1 331.1ZM1198.1 334L1221.1 324.4L1225.3 327.4L1202.3 337.1ZM1206.3 340L1229.4 330.3L1233.6 333.3L1210.5 343.1ZM1214.5 346.1L1237.6 336.2L1241.8 339.3L1218.7 349.2ZM1222.8 352.2L1246 342.3L1250.2 345.3L1227 355.3ZM1231.2 358.3L1254.3 348.3L1258.6 351.4L1235.4 361.4ZM1239.6 364.4L1262.8 354.4L1267.1 357.5L1243.9 367.6ZM1248 370.6L1271.3 360.5L1275.6 363.7L1252.4 373.8ZM1256.6 376.9L1279.9 366.7L1284.2 369.9L1260.9 380.1ZM1185.5 293.5L1208 284.3L1212.1 287.1L1189.5 296.4ZM1193.4 299.2L1216 289.9L1220.1 292.8L1197.5 302.1ZM1201.4 304.9L1224 295.6L1228.1 298.5L1205.5 307.9ZM1209.5 310.7L1232.1 301.3L1236.2 304.2L1213.6 313.7ZM1217.6 316.6L1240.3 307.1L1244.4 310L1221.7 319.5ZM1225.7 322.4L1248.4 312.9L1252.6 315.8L1229.9 325.4ZM1233.9 328.3L1256.7 318.7L1260.9 321.7L1238.1 331.4ZM1242.2 334.3L1265 324.6L1269.2 327.6L1246.4 337.3ZM1250.5 340.3L1273.4 330.5L1277.6 333.6L1254.8 343.4ZM1258.9 346.3L1281.8 336.5L1286.1 339.6L1263.2 349.4ZM1267.4 352.4L1290.3 342.5L1294.6 345.6L1271.7 355.5ZM1275.9 358.5L1298.8 348.6L1303.2 351.7L1280.3 361.7ZM1284.5 364.7L1307.4 354.7L1311.8 357.8L1288.9 367.8Z" fill="#3b3a36" stroke="#0c0c0c" stroke-width="0.8"/>
<path d="M1066.1 342.6L1068.7 341.6L1072.1 344.2ZM1073.8 348.7L1076.5 347.6L1079.9 350.3ZM1081.6 354.8L1084.3 353.7L1087.7 356.4ZM1089.5 360.9L1092.1 359.8L1095.6 362.6ZM1097.4 367.1L1100.1 366L1103.6 368.8ZM1105.4 373.3L1108 372.2L1111.6 375ZM1113.4 379.6L1116.1 378.5L1119.6 381.3ZM1121.5 385.9L1124.2 384.8L1127.8 387.6ZM1129.7 392.3L1132.3 391.2L1135.9 394ZM1137.9 398.7L1140.5 397.6L1144.2 400.4ZM1146.1 405.2L1148.8 404L1152.5 406.9ZM1154.5 411.7L1157.1 410.5L1160.8 413.4ZM1162.9 418.2L1165.5 417.1L1169.3 420ZM1094.8 330.9L1097.3 329.9L1100.8 332.5ZM1102.5 336.9L1105.1 335.8L1108.6 338.5ZM1110.4 342.9L1113 341.8L1116.5 344.5ZM1118.3 349L1120.9 347.9L1124.4 350.6ZM1126.3 355L1128.9 354L1132.4 356.7ZM1134.3 361.2L1136.9 360.1L1140.5 362.8ZM1142.4 367.4L1145 366.3L1148.6 369ZM1150.5 373.6L1153.1 372.5L1156.7 375.3ZM1158.7 379.9L1161.3 378.8L1165 381.6ZM1167 386.2L1169.6 385.1L1173.2 387.9ZM1175.3 392.6L1177.9 391.4L1181.6 394.3ZM1183.6 399L1186.3 397.8L1190 400.7ZM1192.1 405.4L1194.7 404.3L1198.5 407.2ZM1123 319.3L1125.6 318.3L1129 320.9ZM1130.9 325.2L1133.4 324.2L1136.9 326.8ZM1138.8 331.2L1141.3 330.1L1144.8 332.7ZM1146.7 337.1L1149.3 336.1L1152.8 338.7ZM1154.7 343.2L1157.3 342.1L1160.8 344.8ZM1162.8 349.2L1165.3 348.1L1168.9 350.8ZM1170.9 355.3L1173.5 354.2L1177.1 356.9ZM1179.1 361.5L1181.7 360.4L1185.3 363.1ZM1187.3 367.6L1189.9 366.5L1193.6 369.3ZM1195.6 373.9L1198.2 372.8L1201.9 375.5ZM1204 380.2L1206.6 379L1210.3 381.8ZM1212.4 386.5L1215 385.3L1218.7 388.2ZM1220.9 392.8L1223.5 391.7L1227.3 394.5ZM1150.9 307.9L1153.4 306.9L1156.9 309.5ZM1158.8 313.7L1161.3 312.7L1164.8 315.3ZM1166.7 319.6L1169.2 318.6L1172.8 321.2ZM1174.7 325.5L1177.2 324.4L1180.8 327.1ZM1182.8 331.4L1185.3 330.4L1188.9 333ZM1190.9 337.4L1193.4 336.3L1197 339ZM1199.1 343.4L1201.6 342.3L1205.2 345ZM1207.3 349.5L1209.8 348.4L1213.5 351.1ZM1215.6 355.6L1218.1 354.5L1221.8 357.2ZM1223.9 361.7L1226.4 360.6L1230.2 363.4ZM1232.3 367.9L1234.8 366.8L1238.6 369.6ZM1240.8 374.1L1243.3 373L1247.1 375.8ZM1249.3 380.4L1251.8 379.3L1255.6 382.1ZM1178.4 296.7L1180.9 295.7L1184.4 298.2ZM1186.3 302.4L1188.8 301.4L1192.3 303.9ZM1194.3 308.2L1196.8 307.2L1200.4 309.7ZM1202.4 314L1204.8 313L1208.4 315.5ZM1210.4 319.8L1212.9 318.8L1216.5 321.4ZM1218.6 325.7L1221.1 324.7L1224.7 327.3ZM1226.8 331.7L1229.3 330.6L1233 333.3ZM1235.1 337.6L1237.6 336.6L1241.3 339.2ZM1243.4 343.7L1245.9 342.6L1249.6 345.3ZM1251.8 349.7L1254.3 348.6L1258 351.3ZM1260.2 355.8L1262.7 354.7L1266.5 357.5ZM1268.7 362L1271.2 360.9L1275 363.6ZM1277.3 368.2L1279.8 367.1L1283.6 369.8ZM1205.5 285.6L1208 284.6L1211.5 287.1ZM1213.5 291.2L1216 290.2L1219.5 292.7ZM1221.5 296.9L1224 295.9L1227.6 298.4ZM1229.6 302.7L1232.1 301.6L1235.7 304.2ZM1237.7 308.4L1240.2 307.4L1243.8 310ZM1245.9 314.2L1248.4 313.2L1252 315.8ZM1254.2 320.1L1256.6 319.1L1260.3 321.7ZM1262.5 326L1265 324.9L1268.7 327.6ZM1270.9 331.9L1273.3 330.9L1277 333.5ZM1279.3 337.9L1281.7 336.8L1285.5 339.5ZM1287.8 343.9L1290.2 342.8L1294 345.5ZM1296.3 350L1298.8 348.9L1302.6 351.6ZM1304.9 356.1L1307.4 355L1311.2 357.7Z" fill="#6a675f"/>
<path d="M1286.6 665.8L1311.3 653.1L1310.8 657.5L1286.1 670.2ZM1285.4 676.6L1310 663.9L1309.5 668.2L1284.9 680.9ZM1284.2 687.3L1308.7 674.6L1308.2 678.9L1283.7 691.6ZM1283 698L1307.4 685.2L1306.9 689.5L1282.5 702.2ZM1281.8 708.5L1306.1 695.8L1305.6 700L1281.3 712.8ZM1316.4 650.5L1341.2 637.8L1340.6 642.1L1315.9 654.9ZM1315.1 661.3L1339.8 648.5L1339.2 652.9L1314.5 665.6ZM1313.7 672L1338.3 659.2L1337.8 663.5L1313.2 676.3ZM1312.4 682.6L1336.9 669.8L1336.4 674.1L1311.9 686.9ZM1311.1 693.1L1335.5 680.3L1335 684.6L1310.6 697.4Z" fill="#7c796f" stroke="#0c0c0c" stroke-width="0.8"/>
<polygon points="846.1,401.7 851.8,406.9 852.2,415.5 846.5,410.3" fill="#2e2e2c" stroke="#0a0a0a" stroke-width="0.7"/>
<polygon points="847.9,405.4 850.8,408 851,412.3 848.1,409.7" fill="#7d7d79"/>
<polygon points="844,415.4 864.1,433.6 865,456.5 845.1,438.2" fill="#4c4c48" stroke="#0a0a0a" stroke-width="0.8"/>
<polygon points="847.6,422.3 861.9,435.4 857.5,438.9 843.2,425.8" fill="#8a877d" stroke="#0a0a0a" stroke-width="0.7"/>
<polygon points="843.2,425.8 857.5,438.9 858,450.3 843.8,437.2" fill="#6b6a64" stroke="#0a0a0a" stroke-width="0.7"/>
<polygon points="857.5,438.9 861.9,435.4 862.5,448.5 858,450.3" fill="#4f4e4a" stroke="#0a0a0a" stroke-width="0.7"/>
<polygon points="867.6,438.5 881.7,451.3 882.4,471.7 868.4,458.8" fill="#4c4c48" stroke="#0a0a0a" stroke-width="0.8"/>
<polygon points="870.7,444.6 880.1,453.1 875.6,456.7 866.3,448.1" fill="#8a877d" stroke="#0a0a0a" stroke-width="0.7"/>
<polygon points="866.3,448.1 875.6,456.7 875.9,464.3 866.6,455.8" fill="#6b6a64" stroke="#0a0a0a" stroke-width="0.7"/>
<polygon points="875.6,456.7 880.1,453.1 880.4,462.4 875.9,464.3" fill="#4f4e4a" stroke="#0a0a0a" stroke-width="0.7"/>
<polygon points="920.8,486.4 937.5,501.5 937.7,512.3 921.1,497.1" fill="#262624" stroke="#0a0a0a" stroke-width="1.0"/>
<polygon points="924,493 936.4,504.3 936.4,509.4 927.2,501" fill="#383835"/>
<polygon points="948.2,511.2 965.4,526.8 965.4,537.6 948.3,522" fill="#262624" stroke="#0a0a0a" stroke-width="1.0"/>
<polygon points="951.4,517.9 964.1,529.5 964.1,534.7 954.6,526" fill="#383835"/>
<polygon points="991.3,556 991.2,554.4 990.8,552.8 990.2,551.1 989.5,549.4 988.5,547.9 987.5,546.5 986.5,545.5 985.4,544.8 984.4,544.5 983.6,544.5 982.9,545 982.4,545.8 982.2,547 982.2,548.4 982.4,550 982.9,551.7 983.6,553.4 984.4,555 985.4,556.4 986.4,557.6 987.5,558.5 988.5,559 989.4,559.1 990.2,558.9 990.8,558.2 991.2,557.3 991.3,556" fill="#3a3a38" stroke="#0a0a0a" stroke-width="0.8"/>
<polygon points="989,553.9 988.9,553.1 988.8,552.3 988.5,551.4 988.1,550.6 987.6,549.8 987.1,549.2 986.6,548.6 986.1,548.3 985.6,548.1 985.2,548.2 984.8,548.4 984.6,548.8 984.5,549.4 984.5,550.1 984.6,550.9 984.8,551.7 985.1,552.6 985.6,553.4 986.1,554.1 986.6,554.7 987.1,555.1 987.6,555.4 988.1,555.5 988.5,555.3 988.8,555 988.9,554.5 989,553.9" fill="#1c1c1b" stroke="#0a0a0a" stroke-width="0.6"/>
<polygon points="1007.2,568.2 1027.3,586.6 1027.3,591.8 1007.1,573.4" fill="#3a3a37" stroke="#0a0a0a" stroke-width="0.8"/>
<polygon points="1050.6,610.4 1071.6,629.5 1071.4,634.7 1050.5,615.6" fill="#3a3a37" stroke="#0a0a0a" stroke-width="0.8"/>
<polygon points="1020.2,585.6 1033.1,597.4 1036.9,595.7 1023.9,583.9" fill="#7c7b75" stroke="#0a0a0a" stroke-width="0.7"/>
<polygon points="1020.2,585.6 1033.1,597.4 1033,603.5 1020.1,591.7" fill="#5c5b56" stroke="#0a0a0a" stroke-width="0.7"/>
<polygon points="1034.5,598.7 1047.6,610.6 1051.4,608.8 1038.2,596.9" fill="#7c7b75" stroke="#0a0a0a" stroke-width="0.7"/>
<polygon points="1034.5,598.7 1047.6,610.6 1047.5,616.7 1034.4,604.8" fill="#5c5b56" stroke="#0a0a0a" stroke-width="0.7"/>
<polygon points="1025.4,532 1200.9,687.2 1197.1,732.7 1024.7,576.6" fill="#d3d0c6" stroke="#0a0a0a" stroke-width="0.9"/>
<polygon points="1031.6,543 1187.6,681.4 1184.8,718.2 1030.9,579.1" fill="#3b3a37" stroke="#0a0a0a" stroke-width="0.8"/>
<polygon points="1025.4,532 1040.1,525.5 1215.2,678.8 1200.1,686.5" fill="#c9c5b7" stroke="#0a0a0a" stroke-width="0.9"/>
<polygon points="1039.6,566.1 1054.3,579.3 1054,590.4 1039.4,577.3" fill="#2a2a28" stroke="#0a0a0a" stroke-width="0.7"/>
<polygon points="1042.7,571.2 1053.5,580.9 1053.4,585.8 1042.6,576.1" fill="#e8702a" stroke="#7a3510" stroke-width="0.6"/>
<polygon points="1043.7,572.1 1052.8,580.2 1052.7,582.5 1043.7,574.3" fill="#f58c4a"/>
<polygon points="1073.2,581.8 1186.3,682.2 1183.6,716.7 1072,615.8" fill="#23231f" stroke="#0a0a0a" stroke-width="0.8"/>
<polygon points="1081.8,589.9 1186.2,682.6 1184.6,703.6 1081.1,610.6" fill="url(#gflap)" stroke="#0a0a0a" stroke-width="0.7"/>
<line x1="1094.9" y1="602" x2="1094.8" y2="622.5" stroke="#77766f" stroke-width="0.8"/>
<line x1="1097.9" y1="604.6" x2="1097.8" y2="625.2" stroke="#77766f" stroke-width="0.8"/>
<line x1="1167.7" y1="666.6" x2="1167" y2="687.4" stroke="#77766f" stroke-width="0.8"/>
<line x1="1170.8" y1="669.4" x2="1170.2" y2="690.1" stroke="#77766f" stroke-width="0.8"/><polygon points="906.2,489.6 905.2,490.4 897.1,493.8 895.9,494.1 894.5,494 893.1,493.4 891.5,492.4 890,491.1 888.4,489.3 886.9,487.3 885.4,485 884.1,482.6 882.9,480 881.9,477.3 881.1,474.6 880.5,472 880.2,469.6 880.1,467.3 880.3,465.3 880.7,463.6 881.4,462.3 882.2,461.3 883.3,460.8 891.5,457.4 892.7,457.3 894.1,457.6 895.6,458.3 897.2,459.5 898.8,461 900.4,462.9 901.9,465.1 903.3,467.5 904.6,470 905.7,472.7 906.6,475.4 907.3,478.1 907.8,480.6 907.9,483 907.9,485.2 907.5,487 907,488.5" fill="url(#gknob)" stroke="#0a0a0a" stroke-width="0.8"/>
<polygon points="872.6,501.7 871.6,501.9 870.4,501.8 869.2,501.3 867.8,500.5 866.5,499.3 865.1,497.8 863.8,496 862.5,494 861.4,491.8 860.3,489.6 859.5,487.3 858.8,484.9 858.3,482.7 858,480.5 857.9,478.6 858,476.8 858.4,475.4 858.9,474.2 859.7,473.4 860.6,472.9 884.2,463 885.3,462.9 886.5,463.2 887.8,463.9 889.2,464.9 890.6,466.2 891.9,467.8 893.2,469.7 894.5,471.8 895.6,474 896.5,476.3 897.3,478.7 897.9,481 898.3,483.2 898.5,485.3 898.4,487.1 898.2,488.7 897.7,490 897,491 896.1,491.6" fill="url(#gknob)" stroke="#0a0a0a" stroke-width="0.8"/>
<polyline points="887.2,487.8 888.2,489.1 889.3,490.4 890.4,491.4 891.5,492.4 892.5,493.1 893.6,493.6 894.5,494 895.5,494.1 896.3,494.1 897.1,493.8 897.8,493.3 898.4,492.7 898.9,491.8 899.3,490.8 899.6,489.6 899.8,488.3 899.8,486.8 899.7,485.2 899.5,483.6 899.2,481.8 898.8,480 898.3,478.1 897.6,476.3 896.9,474.4 896.1,472.6 895.2,470.9 894.2,469.2 893.2,467.6 892.1,466.2" fill="none" stroke="#0a0a0a" stroke-width="0.8"/>
<polyline points="880.3,489.4 881.3,490.6 882.2,491.7 883.1,492.7 884.1,493.4 885,494.1 885.9,494.5 886.7,494.8 887.5,495 888.3,494.9 888.9,494.7 889.6,494.3 890.1,493.7 890.5,493 890.8,492.1 891.1,491.1 891.2,489.9 891.3,488.7 891.2,487.3 891,485.8 890.7,484.3 890.3,482.7 889.9,481.1 889.3,479.5 888.7,477.9 888,476.3 887.2,474.8 886.4,473.4 885.5,472 884.6,470.8" fill="none" stroke="#0a0a0a" stroke-width="0.7"/>
<polygon points="874.8,495.4 874.7,493.3 874.3,491.1 873.7,488.7 872.9,486.4 871.9,484.1 870.8,481.8 869.5,479.7 868.2,477.8 866.9,476.2 865.5,474.8 864.1,473.8 862.9,473.1 861.7,472.8 860.6,472.9 859.7,473.4 858.9,474.2 858.4,475.4 858,476.8 857.9,478.6 858,480.5 858.3,482.7 858.8,484.9 859.5,487.3 860.3,489.6 861.4,491.8 862.5,494 863.8,496 865.1,497.8 866.5,499.3 867.8,500.5 869.2,501.3 870.4,501.8 871.6,501.9 872.6,501.7 873.4,501.1 874.1,500.1 874.6,498.8 874.8,497.2 874.8,495.4" fill="#2b2b2a" stroke="#0a0a0a" stroke-width="0.8"/>
<polygon points="869.4,494.6 869.2,493.1 868.9,491.4 868.5,489.7 867.9,488 867.2,486.3 866.4,484.7 865.5,483.1 864.5,481.7 863.5,480.5 862.5,479.5 861.5,478.8 860.6,478.3 859.7,478.1 858.9,478.1 858.2,478.5 857.7,479.1 857.3,479.9 857,481 856.9,482.3 857,483.7 857.2,485.3 857.6,486.9 858.1,488.6 858.7,490.4 859.5,492 860.4,493.6 861.3,495.1 862.3,496.4 863.3,497.5 864.3,498.4 865.2,499 866.1,499.4 867,499.4 867.7,499.3 868.3,498.8 868.8,498.1 869.2,497.1 869.4,496 869.4,494.6" fill="#383837" stroke="#1a1a1a" stroke-width="0.5"/>
<polygon points="866.1,492.8 865.9,491.5 865.6,490.1 865.2,488.7 864.5,487.2 863.8,485.9 863,484.7 862.2,483.8 861.4,483.1 860.6,482.6 859.9,482.5 859.3,482.7 858.8,483.2 858.5,484 858.4,485 858.4,486.2 858.7,487.5 859.1,488.9 859.6,490.4 860.3,491.7 861,493 861.8,494 862.7,494.9 863.5,495.5 864.2,495.7 864.9,495.7 865.4,495.4 865.8,494.8 866,493.9 866.1,492.8" fill="#1d1d1d"/>
<polygon points="850.1,499.9 849.7,500 849.4,499.9 849,499.8 848.5,499.5 848.1,499.1 847.6,498.6 847.2,498 846.8,497.3 846.4,496.6 846.1,495.9 845.8,495.1 845.5,494.3 845.4,493.6 845.3,492.9 845.2,492.2 845.3,491.7 845.4,491.2 845.6,490.8 845.8,490.5 846.1,490.4 860.8,484.2 861.1,484.2 861.5,484.3 862,484.5 862.4,484.8 862.8,485.3 863.3,485.8 863.7,486.4 864.1,487.1 864.5,487.9 864.8,488.6 865.1,489.4 865.3,490.2 865.4,490.9 865.5,491.6 865.5,492.2 865.4,492.7 865.2,493.1 865,493.5 864.7,493.7" fill="#2a2a29" stroke="#0a0a0a" stroke-width="0.8"/>
<polygon points="850.8,497.8 850.7,496.9 850.5,495.9 850.1,494.8 849.7,493.8 849.1,492.8 848.6,492 848,491.3 847.4,490.8 846.8,490.5 846.3,490.4 845.9,490.5 845.5,490.8 845.3,491.4 845.2,492.1 845.3,493 845.5,494 845.7,495 846.1,496 846.6,497 847.2,497.9 847.8,498.7 848.4,499.3 848.9,499.7 849.5,499.9 850,499.9 850.3,499.7 850.6,499.2 850.8,498.6 850.8,497.8" fill="#343433" stroke="#0a0a0a" stroke-width="0.7"/><polygon points="775.9,983.3 1027.6,848.4 1020.8,857 1019.1,864 779,990.9" fill="#33312d" stroke="#0a0a0a" stroke-width="0.9"/>
<polygon points="445.7,574.1 775.9,983.3 779,990.9 449.4,581.8" fill="#3a3833" stroke="#0a0a0a" stroke-width="0.9"/>
<polygon points="775.1,974.4 1030.4,813.8 1027.6,848.4 775.9,984.2" fill="#6f6a5f" stroke="#0a0a0a" stroke-width="0.9"/>
<polygon points="444,565.5 775.1,974.4 775.9,984.2 445.9,575" fill="#837e71" stroke="#0a0a0a" stroke-width="0.9"/>
<polygon points="444,565.5 669.3,447.9 1030.4,813.8 775.1,974.4" fill="url(#gpalm)" stroke="#0a0a0a" stroke-width="0.9"/>
<polygon points="665.6,449.8 669.3,447.9 1030.4,813.8 1026.1,816.5" fill="#857f71" stroke="#0a0a0a" stroke-width="0.7"/>
<polygon points="489.7,547 628.1,474.6 973.3,838.2 817,936.1" fill="#403e3a" stroke="#0a0a0a" stroke-width="0.9"/>
<polygon points="489.7,547 625.2,476.2 626.1,479.4 490.7,550.3" fill="#5a5852"/>
<polyline points="662.5,752.5 817,936.1 882.4,895.2" fill="none" stroke="#b9b4a6" stroke-width="0.8"/>
<polygon points="604.9,488.3 618.9,503.4 620.2,522.4 600.7,501.2" fill="url(#gkf)" stroke="#0a0a0a" stroke-width="1.0"/><polygon points="618.9,503.4 634.2,495.4 644.1,509.7 620.2,522.4" fill="url(#gkr)" stroke="#0a0a0a" stroke-width="1.0"/><polygon points="604.9,488.3 620,480.4 634.2,495.4 618.9,503.4" fill="#a39e92" stroke="#0a0a0a" stroke-width="1.0"/>
<polygon points="635.5,523.6 643.1,531.7 643.9,548.2 630.8,533.9" fill="url(#gkf)" stroke="#0a0a0a" stroke-width="1.0"/><polygon points="643.1,531.7 658.4,523.5 668.1,535.2 643.9,548.2" fill="url(#gkr)" stroke="#0a0a0a" stroke-width="1.0"/><polygon points="635.5,523.6 650.9,515.4 658.4,523.5 643.1,531.7" fill="#a39e92" stroke="#0a0a0a" stroke-width="1.0"/>
<polygon points="649.5,538.6 657.1,546.8 658,563.4 644.6,548.9" fill="url(#gkf)" stroke="#0a0a0a" stroke-width="1.0"/><polygon points="657.1,546.8 672.6,538.5 682.3,550.3 658,563.4" fill="url(#gkr)" stroke="#0a0a0a" stroke-width="1.0"/><polygon points="649.5,538.6 664.9,530.3 672.6,538.5 657.1,546.8" fill="#a39e92" stroke="#0a0a0a" stroke-width="1.0"/>
<polygon points="663.6,553.9 671.4,562.2 672.3,578.9 658.7,564.2" fill="url(#gkf)" stroke="#0a0a0a" stroke-width="1.0"/><polygon points="671.4,562.2 687,553.8 696.7,565.6 672.3,578.9" fill="url(#gkr)" stroke="#0a0a0a" stroke-width="1.0"/><polygon points="663.6,553.9 679.1,545.5 687,553.8 671.4,562.2" fill="#a39e92" stroke="#0a0a0a" stroke-width="1.0"/>
<polygon points="678,569.4 685.9,577.9 686.8,594.6 672.9,579.7" fill="url(#gkf)" stroke="#0a0a0a" stroke-width="1.0"/><polygon points="685.9,577.9 701.6,569.3 711.3,581.1 686.8,594.6" fill="url(#gkr)" stroke="#0a0a0a" stroke-width="1.0"/><polygon points="678,569.4 693.6,560.9 701.6,569.3 685.9,577.9" fill="#a39e92" stroke="#0a0a0a" stroke-width="1.0"/>
<polygon points="692.7,585.1 700.7,593.7 701.5,610.6 687.5,595.4" fill="url(#gkf)" stroke="#0a0a0a" stroke-width="1.0"/><polygon points="700.7,593.7 716.4,585.1 726.2,596.9 701.5,610.6" fill="url(#gkr)" stroke="#0a0a0a" stroke-width="1.0"/><polygon points="692.7,585.1 708.3,576.5 716.4,585.1 700.7,593.7" fill="#a39e92" stroke="#0a0a0a" stroke-width="1.0"/>
<polygon points="707.5,601.1 715.7,609.9 716.5,626.9 702.2,611.4" fill="url(#gkf)" stroke="#0a0a0a" stroke-width="1.0"/><polygon points="715.7,609.9 731.5,601.1 741.3,613 716.5,626.9" fill="url(#gkr)" stroke="#0a0a0a" stroke-width="1.0"/><polygon points="707.5,601.1 723.3,592.4 731.5,601.1 715.7,609.9" fill="#a39e92" stroke="#0a0a0a" stroke-width="1.0"/>
<polygon points="722.6,617.4 730.9,626.3 731.7,643.4 717.2,627.7" fill="url(#gkf)" stroke="#0a0a0a" stroke-width="1.0"/><polygon points="730.9,626.3 746.8,617.4 756.7,629.4 731.7,643.4" fill="url(#gkr)" stroke="#0a0a0a" stroke-width="1.0"/><polygon points="722.6,617.4 738.5,608.5 746.8,617.4 730.9,626.3" fill="#a39e92" stroke="#0a0a0a" stroke-width="1.0"/>
<polygon points="738,633.9 746.5,643 747.2,660.2 732.4,644.2" fill="url(#gkf)" stroke="#0a0a0a" stroke-width="1.0"/><polygon points="746.5,643 762.4,634 772.3,646 747.2,660.2" fill="url(#gkr)" stroke="#0a0a0a" stroke-width="1.0"/><polygon points="738,633.9 754,625 762.4,634 746.5,643" fill="#a39e92" stroke="#0a0a0a" stroke-width="1.0"/>
<polygon points="753.6,650.7 762.2,660 763,677.3 747.9,661" fill="url(#gkf)" stroke="#0a0a0a" stroke-width="1.0"/><polygon points="762.2,660 778.3,650.8 788.2,662.9 763,677.3" fill="url(#gkr)" stroke="#0a0a0a" stroke-width="1.0"/><polygon points="753.6,650.7 769.7,641.7 778.3,650.8 762.2,660" fill="#a39e92" stroke="#0a0a0a" stroke-width="1.0"/>
<polygon points="769.5,667.9 778.3,677.2 779,694.7 763.7,678.1" fill="url(#gkf)" stroke="#0a0a0a" stroke-width="1.0"/><polygon points="778.3,677.2 794.4,668 804.4,680 779,694.7" fill="url(#gkr)" stroke="#0a0a0a" stroke-width="1.0"/><polygon points="769.5,667.9 785.7,658.6 794.4,668 778.3,677.2" fill="#a39e92" stroke="#0a0a0a" stroke-width="1.0"/>
<polygon points="785.7,685.3 794.6,694.8 795.3,712.4 779.7,695.5" fill="url(#gkf)" stroke="#0a0a0a" stroke-width="1.0"/><polygon points="794.6,694.8 810.8,685.4 820.8,697.5 795.3,712.4" fill="url(#gkr)" stroke="#0a0a0a" stroke-width="1.0"/><polygon points="785.7,685.3 801.9,675.9 810.8,685.4 794.6,694.8" fill="#a39e92" stroke="#0a0a0a" stroke-width="1.0"/>
<polygon points="802.2,703 811.2,712.7 811.8,730.4 796,713.2" fill="url(#gkf)" stroke="#0a0a0a" stroke-width="1.0"/><polygon points="811.2,712.7 827.5,703.1 837.5,715.3 811.8,730.4" fill="url(#gkr)" stroke="#0a0a0a" stroke-width="1.0"/><polygon points="802.2,703 818.4,693.5 827.5,703.1 811.2,712.7" fill="#a39e92" stroke="#0a0a0a" stroke-width="1.0"/>
<polygon points="818.9,721 828.1,730.9 828.7,748.7 812.6,731.2" fill="url(#gkf)" stroke="#0a0a0a" stroke-width="1.0"/><polygon points="828.1,730.9 844.5,721.2 854.5,733.4 828.7,748.7" fill="url(#gkr)" stroke="#0a0a0a" stroke-width="1.0"/><polygon points="818.9,721 835.3,711.3 844.5,721.2 828.1,730.9" fill="#a39e92" stroke="#0a0a0a" stroke-width="1.0"/>
<polygon points="835.9,739.3 845.3,749.4 845.9,767.3 829.5,749.6" fill="url(#gkf)" stroke="#0a0a0a" stroke-width="1.0"/><polygon points="845.3,749.4 861.8,739.5 871.8,751.8 845.9,767.3" fill="url(#gkr)" stroke="#0a0a0a" stroke-width="1.0"/><polygon points="835.9,739.3 852.4,729.5 861.8,739.5 845.3,749.4" fill="#a39e92" stroke="#0a0a0a" stroke-width="1.0"/>
<polygon points="853.2,757.9 862.8,768.2 863.3,786.3 846.7,768.2" fill="url(#gkf)" stroke="#0a0a0a" stroke-width="1.0"/><polygon points="862.8,768.2 879.4,758.2 889.4,770.5 863.3,786.3" fill="url(#gkr)" stroke="#0a0a0a" stroke-width="1.0"/><polygon points="853.2,757.9 869.8,748 879.4,758.2 862.8,768.2" fill="#a39e92" stroke="#0a0a0a" stroke-width="1.0"/>
<polygon points="883.3,790.3 892.8,800.5 893.3,818.8 876.5,800.5" fill="url(#gkf)" stroke="#0a0a0a" stroke-width="1.0"/><polygon points="892.8,800.5 909.5,790.2 919.6,802.6 893.3,818.8" fill="url(#gkr)" stroke="#0a0a0a" stroke-width="1.0"/><polygon points="883.3,790.3 900,780.1 909.5,790.2 892.8,800.5" fill="#a39e92" stroke="#0a0a0a" stroke-width="1.0"/>
<polygon points="901.4,809.8 911.1,820.2 911.5,838.6 894.4,820" fill="url(#gkf)" stroke="#0a0a0a" stroke-width="1.0"/><polygon points="911.1,820.2 927.9,809.8 938,822.2 911.5,838.6" fill="url(#gkr)" stroke="#0a0a0a" stroke-width="1.0"/><polygon points="901.4,809.8 918.2,799.5 927.9,809.8 911.1,820.2" fill="#a39e92" stroke="#0a0a0a" stroke-width="1.0"/>
<polygon points="919.9,829.7 929.7,840.2 930.1,858.8 912.7,839.8" fill="url(#gkf)" stroke="#0a0a0a" stroke-width="1.0"/><polygon points="929.7,840.2 946.7,829.7 956.8,842.1 930.1,858.8" fill="url(#gkr)" stroke="#0a0a0a" stroke-width="1.0"/><polygon points="919.9,829.7 936.8,819.2 946.7,829.7 929.7,840.2" fill="#a39e92" stroke="#0a0a0a" stroke-width="1.0"/>
<polygon points="579.6,501.6 593.5,516.8 594.8,535.8 575.5,514.4" fill="url(#gkf)" stroke="#0a0a0a" stroke-width="1.0"/><polygon points="593.5,516.8 608.9,508.7 619,523 594.8,535.8" fill="url(#gkr)" stroke="#0a0a0a" stroke-width="1.0"/><polygon points="579.6,501.6 594.9,493.6 608.9,508.7 593.5,516.8" fill="#a39e92" stroke="#0a0a0a" stroke-width="1.0"/>
<polygon points="607.5,534.5 620,548.2 620.9,564.8 602.9,544.8" fill="url(#gkf)" stroke="#0a0a0a" stroke-width="1.0"/><polygon points="620,548.2 635.5,539.9 645.3,551.6 620.9,564.8" fill="url(#gkr)" stroke="#0a0a0a" stroke-width="1.0"/><polygon points="607.5,534.5 623,526.3 635.5,539.9 620,548.2" fill="#a39e92" stroke="#0a0a0a" stroke-width="1.0"/>
<polygon points="626.3,555.2 634.6,564.3 635.5,581 621.6,565.5" fill="url(#gkf)" stroke="#0a0a0a" stroke-width="1.0"/><polygon points="634.6,564.3 650.2,555.9 660.1,567.6 635.5,581" fill="url(#gkr)" stroke="#0a0a0a" stroke-width="1.0"/><polygon points="626.3,555.2 641.9,546.9 650.2,555.9 634.6,564.3" fill="#a39e92" stroke="#0a0a0a" stroke-width="1.0"/>
<polygon points="641,571.4 649.4,580.7 650.3,597.4 636.2,581.7" fill="url(#gkf)" stroke="#0a0a0a" stroke-width="1.0"/><polygon points="649.4,580.7 665.2,572.1 675,583.9 650.3,597.4" fill="url(#gkr)" stroke="#0a0a0a" stroke-width="1.0"/><polygon points="641,571.4 656.7,562.9 665.2,572.1 649.4,580.7" fill="#a39e92" stroke="#0a0a0a" stroke-width="1.0"/>
<polygon points="656,587.9 664.6,597.3 665.4,614.2 651,598.2" fill="url(#gkf)" stroke="#0a0a0a" stroke-width="1.0"/><polygon points="664.6,597.3 680.4,588.6 690.3,600.5 665.4,614.2" fill="url(#gkr)" stroke="#0a0a0a" stroke-width="1.0"/><polygon points="656,587.9 671.8,579.3 680.4,588.6 664.6,597.3" fill="#a39e92" stroke="#0a0a0a" stroke-width="1.0"/>
<polygon points="671.3,604.7 679.9,614.2 680.8,631.2 666.1,614.9" fill="url(#gkf)" stroke="#0a0a0a" stroke-width="1.0"/><polygon points="679.9,614.2 695.8,605.4 705.8,617.3 680.8,631.2" fill="url(#gkr)" stroke="#0a0a0a" stroke-width="1.0"/><polygon points="671.3,604.7 687.1,595.9 695.8,605.4 679.9,614.2" fill="#a39e92" stroke="#0a0a0a" stroke-width="1.0"/>
<polygon points="686.7,621.7 695.6,631.4 696.4,648.5 681.5,632" fill="url(#gkf)" stroke="#0a0a0a" stroke-width="1.0"/><polygon points="695.6,631.4 711.6,622.5 721.6,634.4 696.4,648.5" fill="url(#gkr)" stroke="#0a0a0a" stroke-width="1.0"/><polygon points="686.7,621.7 702.7,612.8 711.6,622.5 695.6,631.4" fill="#a39e92" stroke="#0a0a0a" stroke-width="1.0"/>
<polygon points="702.5,639 711.5,648.9 712.3,666.2 697.1,649.3" fill="url(#gkf)" stroke="#0a0a0a" stroke-width="1.0"/><polygon points="711.5,648.9 727.6,639.9 737.6,651.8 712.3,666.2" fill="url(#gkr)" stroke="#0a0a0a" stroke-width="1.0"/><polygon points="702.5,639 718.6,630.1 727.6,639.9 711.5,648.9" fill="#a39e92" stroke="#0a0a0a" stroke-width="1.0"/>
<polygon points="718.6,656.7 727.7,666.8 728.5,684.1 713,667" fill="url(#gkf)" stroke="#0a0a0a" stroke-width="1.0"/><polygon points="727.7,666.8 743.9,657.6 753.9,669.6 728.5,684.1" fill="url(#gkr)" stroke="#0a0a0a" stroke-width="1.0"/><polygon points="718.6,656.7 734.7,647.6 743.9,657.6 727.7,666.8" fill="#a39e92" stroke="#0a0a0a" stroke-width="1.0"/>
<polygon points="734.9,674.7 744.2,684.9 745,702.4 729.2,684.9" fill="url(#gkf)" stroke="#0a0a0a" stroke-width="1.0"/><polygon points="744.2,684.9 760.5,675.6 770.5,687.6 745,702.4" fill="url(#gkr)" stroke="#0a0a0a" stroke-width="1.0"/><polygon points="734.9,674.7 751.1,665.4 760.5,675.6 744.2,684.9" fill="#a39e92" stroke="#0a0a0a" stroke-width="1.0"/>
<polygon points="751.5,692.9 761,703.4 761.7,721 745.7,703.2" fill="url(#gkf)" stroke="#0a0a0a" stroke-width="1.0"/><polygon points="761,703.4 777.4,693.9 787.5,706 761.7,721" fill="url(#gkr)" stroke="#0a0a0a" stroke-width="1.0"/><polygon points="751.5,692.9 767.8,683.6 777.4,693.9 761,703.4" fill="#a39e92" stroke="#0a0a0a" stroke-width="1.0"/>
<polygon points="768.4,711.6 778.1,722.2 778.8,739.9 762.5,721.8" fill="url(#gkf)" stroke="#0a0a0a" stroke-width="1.0"/><polygon points="778.1,722.2 794.6,712.6 804.7,724.7 778.8,739.9" fill="url(#gkr)" stroke="#0a0a0a" stroke-width="1.0"/><polygon points="768.4,711.6 784.9,702 794.6,712.6 778.1,722.2" fill="#a39e92" stroke="#0a0a0a" stroke-width="1.0"/>
<polygon points="785.7,730.5 795.5,741.3 796.2,759.2 779.6,740.8" fill="url(#gkf)" stroke="#0a0a0a" stroke-width="1.0"/><polygon points="795.5,741.3 812.1,731.6 822.2,743.8 796.2,759.2" fill="url(#gkr)" stroke="#0a0a0a" stroke-width="1.0"/><polygon points="785.7,730.5 802.2,720.9 812.1,731.6 795.5,741.3" fill="#a39e92" stroke="#0a0a0a" stroke-width="1.0"/>
<polygon points="803.2,749.8 813.2,760.8 813.9,778.8 797,760.1" fill="url(#gkf)" stroke="#0a0a0a" stroke-width="1.0"/><polygon points="813.2,760.8 829.9,750.9 840.1,763.2 813.9,778.8" fill="url(#gkr)" stroke="#0a0a0a" stroke-width="1.0"/><polygon points="803.2,749.8 819.8,740 829.9,750.9 813.2,760.8" fill="#a39e92" stroke="#0a0a0a" stroke-width="1.0"/>
<polygon points="554.1,514.9 567.8,530.4 569.2,549.4 550.1,527.8" fill="url(#gkf)" stroke="#0a0a0a" stroke-width="1.0"/><polygon points="567.8,530.4 583.4,522.2 593.6,536.5 569.2,549.4" fill="url(#gkr)" stroke="#0a0a0a" stroke-width="1.0"/><polygon points="554.1,514.9 569.5,506.8 583.4,522.2 567.8,530.4" fill="#a39e92" stroke="#0a0a0a" stroke-width="1.0"/>
<polygon points="584.2,551 602.5,571.6 603.5,588.2 579.6,561.2" fill="url(#gkf)" stroke="#0a0a0a" stroke-width="1.0"/><polygon points="602.5,571.6 618.2,563.1 628.2,574.9 603.5,588.2" fill="url(#gkr)" stroke="#0a0a0a" stroke-width="1.0"/><polygon points="584.2,551 599.8,542.6 618.2,563.1 602.5,571.6" fill="#a39e92" stroke="#0a0a0a" stroke-width="1.0"/>
<polygon points="608.8,578.7 616.4,587.2 617.3,604 604.1,589" fill="url(#gkf)" stroke="#0a0a0a" stroke-width="1.0"/><polygon points="616.4,587.2 632.2,578.6 642.2,590.4 617.3,604" fill="url(#gkr)" stroke="#0a0a0a" stroke-width="1.0"/><polygon points="608.8,578.7 624.6,570.2 632.2,578.6 616.4,587.2" fill="#a39e92" stroke="#0a0a0a" stroke-width="1.0"/>
<polygon points="622.8,594.5 630.5,603.1 631.4,620 618,604.7" fill="url(#gkf)" stroke="#0a0a0a" stroke-width="1.0"/><polygon points="630.5,603.1 646.4,594.4 656.4,606.2 631.4,620" fill="url(#gkr)" stroke="#0a0a0a" stroke-width="1.0"/><polygon points="622.8,594.5 638.7,585.8 646.4,594.4 630.5,603.1" fill="#a39e92" stroke="#0a0a0a" stroke-width="1.0"/>
<polygon points="637.1,610.5 644.8,619.2 645.8,636.2 632.1,620.7" fill="url(#gkf)" stroke="#0a0a0a" stroke-width="1.0"/><polygon points="644.8,619.2 660.8,610.4 670.9,622.3 645.8,636.2" fill="url(#gkr)" stroke="#0a0a0a" stroke-width="1.0"/><polygon points="637.1,610.5 653,601.7 660.8,610.4 644.8,619.2" fill="#a39e92" stroke="#0a0a0a" stroke-width="1.0"/>
<polygon points="651.5,626.7 659.4,635.6 660.3,652.7 646.4,637" fill="url(#gkf)" stroke="#0a0a0a" stroke-width="1.0"/><polygon points="659.4,635.6 675.5,626.7 685.6,638.6 660.3,652.7" fill="url(#gkr)" stroke="#0a0a0a" stroke-width="1.0"/><polygon points="651.5,626.7 667.6,617.9 675.5,626.7 659.4,635.6" fill="#a39e92" stroke="#0a0a0a" stroke-width="1.0"/>
<polygon points="666.2,643.3 674.3,652.3 675.1,669.5 661,653.5" fill="url(#gkf)" stroke="#0a0a0a" stroke-width="1.0"/><polygon points="674.3,652.3 690.4,643.2 700.6,655.2 675.1,669.5" fill="url(#gkr)" stroke="#0a0a0a" stroke-width="1.0"/><polygon points="666.2,643.3 682.4,634.3 690.4,643.2 674.3,652.3" fill="#a39e92" stroke="#0a0a0a" stroke-width="1.0"/>
<polygon points="681.2,660.1 689.3,669.3 690.2,686.6 675.8,670.3" fill="url(#gkf)" stroke="#0a0a0a" stroke-width="1.0"/><polygon points="689.3,669.3 705.6,660.1 715.8,672.1 690.2,686.6" fill="url(#gkr)" stroke="#0a0a0a" stroke-width="1.0"/><polygon points="681.2,660.1 697.4,651 705.6,660.1 689.3,669.3" fill="#a39e92" stroke="#0a0a0a" stroke-width="1.0"/>
<polygon points="696.4,677.2 704.7,686.5 705.5,704 690.9,687.4" fill="url(#gkf)" stroke="#0a0a0a" stroke-width="1.0"/><polygon points="704.7,686.5 721,677.2 731.2,689.2 705.5,704" fill="url(#gkr)" stroke="#0a0a0a" stroke-width="1.0"/><polygon points="696.4,677.2 712.7,667.9 721,677.2 704.7,686.5" fill="#a39e92" stroke="#0a0a0a" stroke-width="1.0"/>
<polygon points="711.8,694.6 720.3,704.1 721.1,721.6 706.2,704.8" fill="url(#gkf)" stroke="#0a0a0a" stroke-width="1.0"/><polygon points="720.3,704.1 736.7,694.6 746.9,706.7 721.1,721.6" fill="url(#gkr)" stroke="#0a0a0a" stroke-width="1.0"/><polygon points="711.8,694.6 728.2,685.2 736.7,694.6 720.3,704.1" fill="#a39e92" stroke="#0a0a0a" stroke-width="1.0"/>
<polygon points="727.5,712.2 736.1,721.9 736.9,739.6 721.8,722.5" fill="url(#gkf)" stroke="#0a0a0a" stroke-width="1.0"/><polygon points="736.1,721.9 752.7,712.3 762.9,724.4 736.9,739.6" fill="url(#gkr)" stroke="#0a0a0a" stroke-width="1.0"/><polygon points="727.5,712.2 744,702.7 752.7,712.3 736.1,721.9" fill="#a39e92" stroke="#0a0a0a" stroke-width="1.0"/>
<polygon points="743.5,730.2 752.3,740.1 753,757.9 737.7,740.4" fill="url(#gkf)" stroke="#0a0a0a" stroke-width="1.0"/><polygon points="752.3,740.1 768.9,730.4 779.2,742.5 753,757.9" fill="url(#gkr)" stroke="#0a0a0a" stroke-width="1.0"/><polygon points="743.5,730.2 760.1,720.6 768.9,730.4 752.3,740.1" fill="#a39e92" stroke="#0a0a0a" stroke-width="1.0"/>
<polygon points="759.8,748.5 768.7,758.6 769.4,776.5 753.8,758.7" fill="url(#gkf)" stroke="#0a0a0a" stroke-width="1.0"/><polygon points="768.7,758.6 785.4,748.7 795.8,760.9 769.4,776.5" fill="url(#gkr)" stroke="#0a0a0a" stroke-width="1.0"/><polygon points="759.8,748.5 776.5,738.8 785.4,748.7 768.7,758.6" fill="#a39e92" stroke="#0a0a0a" stroke-width="1.0"/>
<polygon points="776.4,767.2 785.4,777.4 786.1,795.4 770.2,777.3" fill="url(#gkf)" stroke="#0a0a0a" stroke-width="1.0"/><polygon points="785.4,777.4 802.3,767.4 812.6,779.6 786.1,795.4" fill="url(#gkr)" stroke="#0a0a0a" stroke-width="1.0"/><polygon points="776.4,767.2 793.1,757.2 802.3,767.4 785.4,777.4" fill="#a39e92" stroke="#0a0a0a" stroke-width="1.0"/>
<polygon points="793.2,786.1 807.1,801.7 807.7,819.9 786.9,796.3" fill="url(#gkf)" stroke="#0a0a0a" stroke-width="1.0"/><polygon points="807.1,801.7 851.9,774.8 862.1,787.1 807.7,819.9" fill="url(#gkr)" stroke="#0a0a0a" stroke-width="1.0"/><polygon points="793.2,786.1 837.8,759.5 851.9,774.8 807.1,801.7" fill="#a39e92" stroke="#0a0a0a" stroke-width="1.0"/>
<polygon points="834.3,840.8 854.8,864 855.4,882.5 827.6,850.9" fill="url(#gkf)" stroke="#0a0a0a" stroke-width="1.0"/><polygon points="854.8,864 877.9,849.7 888.3,862.1 855.4,882.5" fill="url(#gkr)" stroke="#0a0a0a" stroke-width="1.0"/><polygon points="834.3,840.8 857.2,826.8 877.9,849.7 854.8,864" fill="#a39e92" stroke="#0a0a0a" stroke-width="1.0"/>
<polygon points="562.6,570 581.9,592.2 583,609 558.2,580.2" fill="url(#gkf)" stroke="#0a0a0a" stroke-width="1.0"/><polygon points="581.9,592.2 597.9,583.6 608,595.4 583,609" fill="url(#gkr)" stroke="#0a0a0a" stroke-width="1.0"/><polygon points="562.6,570 578.4,561.6 597.9,583.6 581.9,592.2" fill="#a39e92" stroke="#0a0a0a" stroke-width="1.0"/>
<polygon points="588.3,599.5 595.8,608.2 596.9,625.1 583.6,609.8" fill="url(#gkf)" stroke="#0a0a0a" stroke-width="1.0"/><polygon points="595.8,608.2 611.9,599.5 622,611.3 596.9,625.1" fill="url(#gkr)" stroke="#0a0a0a" stroke-width="1.0"/><polygon points="588.3,599.5 604.3,590.9 611.9,599.5 595.8,608.2" fill="#a39e92" stroke="#0a0a0a" stroke-width="1.0"/>
<polygon points="602.3,615.7 610,624.5 611,641.5 597.5,625.9" fill="url(#gkf)" stroke="#0a0a0a" stroke-width="1.0"/><polygon points="610,624.5 626.1,615.7 636.3,627.5 611,641.5" fill="url(#gkr)" stroke="#0a0a0a" stroke-width="1.0"/><polygon points="602.3,615.7 618.4,606.9 626.1,615.7 610,624.5" fill="#a39e92" stroke="#0a0a0a" stroke-width="1.0"/>
<polygon points="616.5,632 624.3,641 625.3,658.1 611.6,642.3" fill="url(#gkf)" stroke="#0a0a0a" stroke-width="1.0"/><polygon points="624.3,641 640.5,632.1 650.8,644 625.3,658.1" fill="url(#gkr)" stroke="#0a0a0a" stroke-width="1.0"/><polygon points="616.5,632 632.7,623.2 640.5,632.1 624.3,641" fill="#a39e92" stroke="#0a0a0a" stroke-width="1.0"/>
<polygon points="631,648.7 639,657.8 639.9,675 626,658.9" fill="url(#gkf)" stroke="#0a0a0a" stroke-width="1.0"/><polygon points="639,657.8 655.2,648.8 665.5,660.7 639.9,675" fill="url(#gkr)" stroke="#0a0a0a" stroke-width="1.0"/><polygon points="631,648.7 647.3,639.7 655.2,648.8 639,657.8" fill="#a39e92" stroke="#0a0a0a" stroke-width="1.0"/>
<polygon points="645.7,665.6 653.8,674.9 654.7,692.2 640.6,675.8" fill="url(#gkf)" stroke="#0a0a0a" stroke-width="1.0"/><polygon points="653.8,674.9 670.2,665.7 680.5,677.7 654.7,692.2" fill="url(#gkr)" stroke="#0a0a0a" stroke-width="1.0"/><polygon points="645.7,665.6 662.1,656.5 670.2,665.7 653.8,674.9" fill="#a39e92" stroke="#0a0a0a" stroke-width="1.0"/>
<polygon points="660.7,682.9 668.9,692.3 669.8,709.7 655.4,693.1" fill="url(#gkf)" stroke="#0a0a0a" stroke-width="1.0"/><polygon points="668.9,692.3 685.4,683 695.7,695 669.8,709.7" fill="url(#gkr)" stroke="#0a0a0a" stroke-width="1.0"/><polygon points="660.7,682.9 677.1,673.6 685.4,683 668.9,692.3" fill="#a39e92" stroke="#0a0a0a" stroke-width="1.0"/>
<polygon points="675.9,700.4 684.3,710 685.2,727.5 670.5,710.6" fill="url(#gkf)" stroke="#0a0a0a" stroke-width="1.0"/><polygon points="684.3,710 700.9,700.5 711.2,712.6 685.2,727.5" fill="url(#gkr)" stroke="#0a0a0a" stroke-width="1.0"/><polygon points="675.9,700.4 692.5,691 700.9,700.5 684.3,710" fill="#a39e92" stroke="#0a0a0a" stroke-width="1.0"/>
<polygon points="691.4,718.2 699.9,728 700.8,745.7 685.9,728.4" fill="url(#gkf)" stroke="#0a0a0a" stroke-width="1.0"/><polygon points="699.9,728 716.6,718.4 727,730.5 700.8,745.7" fill="url(#gkr)" stroke="#0a0a0a" stroke-width="1.0"/><polygon points="691.4,718.2 708,708.7 716.6,718.4 699.9,728" fill="#a39e92" stroke="#0a0a0a" stroke-width="1.0"/>
<polygon points="707.2,736.3 715.8,746.3 716.7,764.1 701.5,746.5" fill="url(#gkf)" stroke="#0a0a0a" stroke-width="1.0"/><polygon points="715.8,746.3 732.6,736.6 743,748.7 716.7,764.1" fill="url(#gkr)" stroke="#0a0a0a" stroke-width="1.0"/><polygon points="707.2,736.3 723.9,726.7 732.6,736.6 715.8,746.3" fill="#a39e92" stroke="#0a0a0a" stroke-width="1.0"/>
<polygon points="723.2,754.8 732,764.9 732.8,782.8 717.4,765" fill="url(#gkf)" stroke="#0a0a0a" stroke-width="1.0"/><polygon points="732,764.9 748.9,755.1 759.3,767.2 732.8,782.8" fill="url(#gkr)" stroke="#0a0a0a" stroke-width="1.0"/><polygon points="723.2,754.8 740,745 748.9,755.1 732,764.9" fill="#a39e92" stroke="#0a0a0a" stroke-width="1.0"/>
<polygon points="739.5,773.6 748.5,783.9 749.3,801.9 733.6,783.7" fill="url(#gkf)" stroke="#0a0a0a" stroke-width="1.0"/><polygon points="748.5,783.9 765.5,773.9 775.9,786.1 749.3,801.9" fill="url(#gkr)" stroke="#0a0a0a" stroke-width="1.0"/><polygon points="739.5,773.6 756.4,763.6 765.5,773.9 748.5,783.9" fill="#a39e92" stroke="#0a0a0a" stroke-width="1.0"/>
<polygon points="757.4,794.1 771.7,810.6 772.4,828.7 751.3,804.2" fill="url(#gkf)" stroke="#0a0a0a" stroke-width="1.0"/><polygon points="771.7,810.6 788.8,800.3 799.3,812.6 772.4,828.7" fill="url(#gkr)" stroke="#0a0a0a" stroke-width="1.0"/><polygon points="757.4,794.1 774.4,784 788.8,800.3 771.7,810.6" fill="#a39e92" stroke="#0a0a0a" stroke-width="1.0"/>
<polygon points="821.8,869.5 842.5,893.3 843.1,912 815.2,879.5" fill="url(#gkf)" stroke="#0a0a0a" stroke-width="1.0"/><polygon points="842.5,893.3 861.4,881.5 872,893.9 843.1,912" fill="url(#gkr)" stroke="#0a0a0a" stroke-width="1.0"/><polygon points="821.8,869.5 840.6,858 861.4,881.5 842.5,893.3" fill="#a39e92" stroke="#0a0a0a" stroke-width="1.0"/>
<polygon points="792.2,843.2 814.4,868.8 815.1,887.4 785.8,853.2" fill="url(#gkf)" stroke="#0a0a0a" stroke-width="1.0"/><polygon points="814.4,868.8 837.6,854.6 848.2,866.9 815.1,887.4" fill="url(#gkr)" stroke="#0a0a0a" stroke-width="1.0"/><polygon points="792.2,843.2 815.2,829.2 837.6,854.6 814.4,868.8" fill="#a39e92" stroke="#0a0a0a" stroke-width="1.0"/>
<polygon points="502.3,542 515.8,557.8 517.3,576.9 498.7,554.8" fill="url(#gkf)" stroke="#0a0a0a" stroke-width="1.0"/><polygon points="515.8,557.8 531.6,549.5 542.2,563.7 517.3,576.9" fill="url(#gkr)" stroke="#0a0a0a" stroke-width="1.0"/><polygon points="502.3,542 518.1,533.7 531.6,549.5 515.8,557.8" fill="#a39e92" stroke="#0a0a0a" stroke-width="1.0"/>
<polygon points="561.7,613.9 567.6,620.9 568.7,637.8 557.1,624.1" fill="url(#gkf)" stroke="#0a0a0a" stroke-width="1.0"/><polygon points="567.6,620.9 583.8,612.2 594.1,624 568.7,637.8" fill="url(#gkr)" stroke="#0a0a0a" stroke-width="1.0"/><polygon points="561.7,613.9 577.8,605.2 583.8,612.2 567.6,620.9" fill="#a39e92" stroke="#0a0a0a" stroke-width="1.0"/>
<polygon points="575.1,629.7 582.5,638.5 583.5,655.5 570.4,639.9" fill="url(#gkf)" stroke="#0a0a0a" stroke-width="1.0"/><polygon points="582.5,638.5 598.7,629.5 609.1,641.4 583.5,655.5" fill="url(#gkr)" stroke="#0a0a0a" stroke-width="1.0"/><polygon points="575.1,629.7 591.3,620.9 598.7,629.5 582.5,638.5" fill="#a39e92" stroke="#0a0a0a" stroke-width="1.0"/>
<polygon points="589,646.1 702.1,779.3 703,797.3 584.2,656.3" fill="url(#gkf)" stroke="#0a0a0a" stroke-width="1.0"/><polygon points="702.1,779.3 719.1,769.3 729.7,781.5 703,797.3" fill="url(#gkr)" stroke="#0a0a0a" stroke-width="1.0"/><polygon points="589,646.1 605.3,637.1 719.1,769.3 702.1,779.3" fill="#a39e92" stroke="#0a0a0a" stroke-width="1.0"/>
<polygon points="712.4,791.5 722.7,803.6 723.6,821.7 706.6,801.6" fill="url(#gkf)" stroke="#0a0a0a" stroke-width="1.0"/><polygon points="722.7,803.6 739.9,793.4 750.5,805.6 723.6,821.7" fill="url(#gkr)" stroke="#0a0a0a" stroke-width="1.0"/><polygon points="712.4,791.5 729.5,781.4 739.9,793.4 722.7,803.6" fill="#a39e92" stroke="#0a0a0a" stroke-width="1.0"/>
<polygon points="779.6,874.2 803.3,902.2 804,920.9 773.2,884.2" fill="url(#gkf)" stroke="#0a0a0a" stroke-width="1.0"/><polygon points="803.3,902.2 823.5,889.7 834.3,902.1 804,920.9" fill="url(#gkr)" stroke="#0a0a0a" stroke-width="1.0"/><polygon points="779.6,874.2 799.6,862 823.5,889.7 803.3,902.2" fill="#a39e92" stroke="#0a0a0a" stroke-width="1.0"/>
<polygon points="560.2,604.3 566.4,600.9 570.1,605.3 564,608.7" fill="#d8d5c8" stroke="#0a0a0a" stroke-width="0.8"/>
<polygon points="737.6,812.3 744.2,808.4 748.8,813.8 742.2,817.7" fill="#d8d5c8" stroke="#0a0a0a" stroke-width="0.8"/>
<polygon points="623.1,471.3 968.6,835.5 968.6,841.4 623.8,476.9" fill="#8f8c82" stroke="#0a0a0a" stroke-width="0.7"/>
<polygon points="968.6,835.5 1017.7,804.7 1017.7,807.9 968.6,838.6" fill="#9a968a" stroke="#0a0a0a" stroke-width="0.7"/>
<polygon points="623.1,471.3 666.8,448.4 1017.7,804.7 968.6,835.5" fill="#cbc7ba" stroke="#0a0a0a" stroke-width="0.9"/>
<polyline points="622.5,470.7 668.7,446.7" fill="none" stroke="#2a2926" stroke-width="1.8"/>
<polygon points="714.5,544.9 729.2,536.9 751.8,560.1 737,568.3" fill="#6e6b62" stroke="#0a0a0a" stroke-width="0.7"/><polygon points="718.8,541.1 736.1,559 737.2,565.3 718.2,545.6" fill="#8b887d" stroke="#0a0a0a" stroke-width="0.7"/><polygon points="736.1,559 745,554.1 748.1,559.4 737.2,565.3" fill="#77746b" stroke="#0a0a0a" stroke-width="0.7"/><polygon points="718.8,541.1 727.7,536.3 745,554.1 736.1,559" fill="#aaa598" stroke="#0a0a0a" stroke-width="0.7"/>
<polygon points="737.2,568.5 752,560.3 775.2,584.1 760.2,592.5" fill="#6e6b62" stroke="#0a0a0a" stroke-width="0.7"/><polygon points="741.6,564.7 759.3,583 760.4,589.5 740.9,569.2" fill="#8b887d" stroke="#0a0a0a" stroke-width="0.7"/><polygon points="759.3,583 768.2,578 771.4,583.4 760.4,589.5" fill="#77746b" stroke="#0a0a0a" stroke-width="0.7"/><polygon points="741.6,564.7 750.5,559.8 768.2,578 759.3,583" fill="#aaa598" stroke="#0a0a0a" stroke-width="0.7"/>
<polygon points="760.4,592.7 775.4,584.3 799.1,608.8 784,617.3" fill="#6e6b62" stroke="#0a0a0a" stroke-width="0.7"/><polygon points="764.9,588.9 783,607.7 784.2,614.2 764.2,593.4" fill="#8b887d" stroke="#0a0a0a" stroke-width="0.7"/><polygon points="783,607.7 792.1,602.6 795.2,608 784.2,614.2" fill="#77746b" stroke="#0a0a0a" stroke-width="0.7"/><polygon points="764.9,588.9 773.9,583.9 792.1,602.6 783,607.7" fill="#aaa598" stroke="#0a0a0a" stroke-width="0.7"/>
<polygon points="784.2,617.5 799.3,609 823.6,634 808.5,642.7" fill="#6e6b62" stroke="#0a0a0a" stroke-width="0.7"/><polygon points="788.8,613.7 807.4,632.9 808.6,639.5 788.1,618.3" fill="#8b887d" stroke="#0a0a0a" stroke-width="0.7"/><polygon points="807.4,632.9 816.5,627.8 819.7,633.2 808.6,639.5" fill="#77746b" stroke="#0a0a0a" stroke-width="0.7"/><polygon points="788.8,613.7 797.9,608.6 816.5,627.8 807.4,632.9" fill="#aaa598" stroke="#0a0a0a" stroke-width="0.7"/>
<polygon points="808.6,642.9 823.8,634.2 848.8,659.9 833.5,668.8" fill="#6e6b62" stroke="#0a0a0a" stroke-width="0.7"/><polygon points="813.4,639.1 832.4,658.9 833.6,665.6 812.6,643.7" fill="#8b887d" stroke="#0a0a0a" stroke-width="0.7"/><polygon points="832.4,658.9 841.6,653.6 844.8,659.1 833.6,665.6" fill="#77746b" stroke="#0a0a0a" stroke-width="0.7"/><polygon points="813.4,639.1 822.5,633.9 841.6,653.6 832.4,658.9" fill="#aaa598" stroke="#0a0a0a" stroke-width="0.7"/>
<polygon points="881,718.2 896.5,709 923.8,737 908.1,746.5" fill="#6e6b62" stroke="#0a0a0a" stroke-width="0.7"/><polygon points="886,714.4 906.9,736.1 908.1,743 885.1,719.1" fill="#8b887d" stroke="#0a0a0a" stroke-width="0.7"/><polygon points="906.9,736.1 916.3,730.4 919.6,736.1 908.1,743" fill="#77746b" stroke="#0a0a0a" stroke-width="0.7"/><polygon points="886,714.4 895.3,708.9 916.3,730.4 906.9,736.1" fill="#aaa598" stroke="#0a0a0a" stroke-width="0.7"/></svg><div style="left:0px;top:136px;width:1920px;height:3.7px;background:linear-gradient(#dedede 0,#dedede 18%,#efefef 19%,#f5f5f5 100%)"></div><svg style="left:1790px;top:140px" width="130" height="140" viewBox="1790 140 130 140"><defs><filter id="cb" x="-50%" y="-50%" width="200%" height="200%"><feGaussianBlur stdDeviation="5"/></filter></defs><polygon points="1836.0,232.0 1852.0,250.0 1900.0,228.0 1886.0,210.0" fill="#000" opacity="0.28" filter="url(#cb)"/><polygon points="1822.7,180.1 1861.5,166.1 1892.2,188.8 1849.5,206.1" fill="#f0f0f0" fill-opacity="0.9"/><polygon points="1822.7,180.1 1849.5,206.1 1850.1,243.5 1826.1,216.8" fill="#e9e9e9" fill-opacity="0.88"/><polygon points="1849.5,206.1 1892.2,188.8 1888.9,222.2 1850.1,243.5" fill="#e4e4e4" fill-opacity="0.88"/><path d="M1822.7 180.1 L1861.5 166.1 L1892.2 188.8 L1849.5 206.1 Z M1849.5 206.1 L1850.1 243.5 M1822.7 180.1 L1826.1 216.8 L1850.1 243.5 M1892.2 188.8 L1888.9 222.2" fill="none" stroke="#9c9c9c" stroke-width="0.8" stroke-dasharray="3 1.6"/><path d="M1850.1 243.5 L1888.9 222.2" stroke="#9c9c9c" stroke-width="0.8" stroke-dasharray="3 1.6"/><polygon points="1844.2,203.0 1849.5,198.8 1857.5,203.0 1857.5,210.5 1851.0,214.5 1844.5,210.5" fill="#e3e8f2"/><text class="cj" transform="matrix(1.662 1.612 -2.406 0.868 1838.05 181.34)" x="0" y="0" font-size="10" fill="#8b8d92">上</text><text class="cj" transform="matrix(1.488 1.655 0.211 2.275 1829.76 212.17)" x="0" y="0" font-size="10" fill="#8b8d92">前</text><text class="cj" transform="matrix(2.406 -1.321 0.037 2.319 1857.31 229.56)" x="0" y="0" font-size="10" fill="#8b8d92">右</text><path d="M1826.1 216.8 L1821 174.7" stroke="#6a6aff" stroke-width="1.4"/><path d="M1826.1 216.8 L1855.5 250.9" stroke="#f47a7a" stroke-width="1.4"/><text class="cj" x="1815.8" y="172.4" font-size="12" fill="#7777ff">Z</text><text class="cj" x="1855.2" y="260.6" font-size="12" fill="#f77">X</text></svg><div style="left:4.3px;top:144.4px;width:299.3px;height:24px;background:#f2f2f2;border:1px solid #c6c6c6"></div><svg style="left:9.5px;top:153.5px" width="10.5" height="7" viewBox="0 0 10.5 7"><path d="M5 0V7L0 3.5Z M10.5 0V7L5.5 3.5Z" fill="#222"/></svg><svg class="tx" style="left:29px;top:147.2px" width="34" height="18" fill="#333"><text x="0" y="13" font-size="11" textLength="31.5" lengthAdjust="spacingAndGlyphs">ブラウザ</text></svg><svg style="left:282.8px;top:151.5px" width="10" height="10" viewBox="0 0 10 10"><circle cx="5" cy="5" r="4.8" fill="#111"/><rect x="2.2" y="4.1" width="5.6" height="1.8" fill="#fff"/></svg><div style="left:299px;top:151.5px;width:1px;height:10px;background:#555"></div><div style="left:301px;top:152.5px;width:1px;height:8px;background:#999"></div><div style="left:8.2px;top:174px;width:5.6px;height:813.5px;background:#c6c6c6"></div><div style="left:8.2px;top:174px;width:5.6px;height:110px;background:#8d8d8d;border-radius:3px 3px 0 0"></div><svg style="left:21px;top:178px" width="12" height="12" viewBox="0 0 12 12"><defs><linearGradient id="ge" x1="0" y1="1" x2="1" y2="0"><stop offset="0" stop-color="#bbb"/><stop offset="1" stop-color="#333"/></linearGradient></defs><path d="M0.8 11.2 L11.2 11.2 L11.2 0.8Z" fill="url(#ge)" stroke="#333" stroke-width="0.9" stroke-linejoin="round"/></svg><div class="row" style="left:40px;top:174.5px;width:140px;height:19.5px;"></div><svg style="left:43px;top:178px" width="16" height="12" viewBox="0 0 16 12" style="overflow:visible"><path d="M0 6 Q8 -4.6 16 6 Q8 16.6 0 6Z" fill="#9b9b9b"/><circle cx="8" cy="6" r="3.7" fill="#f1f1f1"/><circle cx="8" cy="6" r="2.15" fill="#9b9b9b"/></svg><div style="left:65px;top:176.5px;width:90px;height:15px;background:#9b9b9b"></div><svg style="left:68px;top:176px" width="16" height="16" viewBox="0 0 16 16"><path d="M1 4.5 L4.5 1 H15 V11.5 L11.5 15 H1Z" fill="#e4e7ee" stroke="#333" stroke-width="1" stroke-linejoin="round"/><path d="M1 4.5 H11.5 V15 M11.5 4.5 L15 1" fill="none" stroke="#333" stroke-width="1"/><path d="M1.5 5H11V14.5H1.5Z" fill="#f7f8fb"/></svg><svg class="tx" style="left:98.5px;top:175.4px" width="47" height="18" fill="#fff"><text x="0" y="13" font-size="11" font-weight="bold" textLength="44" lengthAdjust="spacingAndGlyphs">PX-7 v43</text></svg><svg style="left:158.5px;top:177.5px" width="14" height="14" viewBox="0 0 14 14"><circle cx="7" cy="7" r="5.8" fill="#fff" stroke="#222" stroke-width="1.2"/><circle cx="7" cy="7" r="2.4" fill="#111"/></svg><div class="row" style="left:58.3px;top:198.2px;width:121.7px;height:19.6px;"></div><svg style="left:40px;top:201.5px" width="10" height="13" viewBox="0 0 10 13"><path d="M1 0.8 L8.8 6.5 L1 12.2Z" fill="#f4f4f4" stroke="#333" stroke-width="1.3" stroke-linejoin="round"/></svg><svg style="left:61px;top:200px" width="16" height="16" viewBox="0 0 16 16"><path d="M15.81 6.25L15.81 9.75L13.56 9.97L13.32 10.54L14.76 12.29L12.29 14.76L10.54 13.32L9.97 13.56L9.75 15.81L6.25 15.81L6.03 13.56L5.46 13.32L3.71 14.76L1.24 12.29L2.68 10.54L2.44 9.97L0.19 9.75L0.19 6.25L2.44 6.03L2.68 5.46L1.24 3.71L3.71 1.24L5.46 2.68L6.03 2.44L6.25 0.19L9.75 0.19L9.97 2.44L10.54 2.68L12.29 1.24L14.76 3.71L13.32 5.46L13.56 6.03Z" fill="#9a9a9a"/><circle cx="8" cy="8" r="2.7" fill="#f1f1f1"/></svg><svg class="tx" style="left:91.5px;top:198.9px" width="79" height="18" fill="#222"><text x="0" y="13" font-size="11" textLength="76.5" lengthAdjust="spacingAndGlyphs">ドキュメントの設定</text></svg><div class="row" style="left:58.3px;top:222.2px;width:89.7px;height:19.6px;"></div><svg style="left:40px;top:225.5px" width="10" height="13" viewBox="0 0 10 13"><path d="M1 0.8 L8.8 6.5 L1 12.2Z" fill="#f4f4f4" stroke="#333" stroke-width="1.3" stroke-linejoin="round"/></svg><svg style="left:60.8px;top:226px" width="17" height="13" viewBox="0 0 17 13"><path d="M0.5 1.2 H6.2 L7.4 2.8 H16.3 V12.6 H0.5Z" fill="#a2a2a2"/><path d="M0.5 3.6H16.3" stroke="#b9b9b9" stroke-width="0.8"/></svg><svg class="tx" style="left:90.3px;top:222.9px" width="48" height="18" fill="#222"><text x="0" y="13" font-size="11" textLength="45.5" lengthAdjust="spacingAndGlyphs">ビュー管理</text></svg><div class="row" style="left:58.3px;top:246.2px;width:90.5px;height:19.6px;"></div><svg style="left:40px;top:249.5px" width="10" height="13" viewBox="0 0 10 13"><path d="M1 0.8 L8.8 6.5 L1 12.2Z" fill="#f4f4f4" stroke="#333" stroke-width="1.3" stroke-linejoin="round"/></svg><svg style="left:61px;top:249.5px" width="16" height="13" viewBox="0 0 16 13"><path d="M0.8 6.5 Q8 -1.5 15.2 6.5 Q8 14.5 0.8 6.5Z" fill="none" stroke="#b5b5b5" stroke-width="1"/><circle cx="8" cy="6.5" r="2.6" fill="none" stroke="#b5b5b5" stroke-width="1"/><path d="M2.5 1 L13.5 12.5" stroke="#b5b5b5" stroke-width="1.1"/></svg><svg style="left:85.7px;top:250px" width="17" height="13" viewBox="0 0 17 13"><path d="M0.5 1.2 H6.2 L7.4 2.8 H16.3 V12.6 H0.5Z" fill="#a2a2a2"/><path d="M0.5 3.6H16.3" stroke="#b9b9b9" stroke-width="0.8"/></svg><svg class="tx" style="left:115.5px;top:246.9px" width="23" height="18" fill="#222"><text x="0" y="13" font-size="11" textLength="20.5" lengthAdjust="spacingAndGlyphs">原点</text></svg><div class="row" style="left:58.3px;top:270.2px;width:90.5px;height:19.6px;"></div><svg style="left:38.6px;top:274px" width="12" height="12" viewBox="0 0 12 12"><defs><linearGradient id="ge" x1="0" y1="1" x2="1" y2="0"><stop offset="0" stop-color="#bbb"/><stop offset="1" stop-color="#333"/></linearGradient></defs><path d="M0.8 11.2 L11.2 11.2 L11.2 0.8Z" fill="url(#ge)" stroke="#333" stroke-width="0.9" stroke-linejoin="round"/></svg><svg style="left:61px;top:274px" width="16" height="12" viewBox="0 0 16 12" style="overflow:visible"><path d="M0 6 Q8 -4.6 16 6 Q8 16.6 0 6Z" fill="#9b9b9b"/><circle cx="8" cy="6" r="3.7" fill="#f1f1f1"/><circle cx="8" cy="6" r="2.15" fill="#9b9b9b"/></svg><svg style="left:85.7px;top:274px" width="17" height="13" viewBox="0 0 17 13"><path d="M0.5 1.2 H6.2 L7.4 2.8 H16.3 V12.6 H0.5Z" fill="#a2a2a2"/><path d="M0.5 3.6H16.3" stroke="#b9b9b9" stroke-width="0.8"/></svg><svg class="tx" style="left:115.5px;top:270.9px" width="26" height="18" fill="#222"><text x="0" y="13" font-size="11" textLength="23.5" lengthAdjust="spacingAndGlyphs">ボディ</text></svg><div class="row" style="left:76px;top:294.2px;width:170.7px;height:19.6px;"></div><svg style="left:58.2px;top:297.5px" width="10" height="13" viewBox="0 0 10 13"><path d="M1 0.8 L8.8 6.5 L1 12.2Z" fill="#f4f4f4" stroke="#333" stroke-width="1.3" stroke-linejoin="round"/></svg><svg style="left:79.2px;top:298px" width="16" height="12" viewBox="0 0 16 12" style="overflow:visible"><path d="M0 6 Q8 -4.6 16 6 Q8 16.6 0 6Z" fill="#9b9b9b"/><circle cx="8" cy="6" r="3.7" fill="#f1f1f1"/><circle cx="8" cy="6" r="2.15" fill="#9b9b9b"/></svg><svg style="left:103.8px;top:298px" width="17" height="13" viewBox="0 0 17 13"><path d="M0.5 1.2 H6.2 L7.4 2.8 H16.3 V12.6 H0.5Z" fill="#a2a2a2"/><path d="M0.5 3.6H16.3" stroke="#b9b9b9" stroke-width="0.8"/></svg><svg class="tx" style="left:133.3px;top:294.9px" width="104" height="18" fill="#222"><text x="0" y="13" font-size="11" textLength="101.5" lengthAdjust="spacingAndGlyphs">キーボードグループ (10)</text></svg><div class="row" style="left:76px;top:318.2px;width:130.8px;height:19.6px;"></div><svg style="left:79.2px;top:322px" width="16" height="12" viewBox="0 0 16 12" style="overflow:visible"><path d="M0 6 Q8 -4.6 16 6 Q8 16.6 0 6Z" fill="#9b9b9b"/><circle cx="8" cy="6" r="3.7" fill="#f1f1f1"/><circle cx="8" cy="6" r="2.15" fill="#9b9b9b"/></svg><svg style="left:104px;top:320px" width="16" height="16" viewBox="0 0 16 16"><defs><linearGradient id="gb" x1="0" x2="1"><stop offset="0" stop-color="#fdfdfe"/><stop offset="0.5" stop-color="#dfe3ea"/><stop offset="1" stop-color="#b3bac7"/></linearGradient></defs><rect x="0.6" y="0.6" width="14.8" height="14.8" rx="4.6" fill="#fff" stroke="#3b4456" stroke-width="1.1"/><path d="M4.6 5.8 H14.3 V11 Q14.3 14.4 10.5 14.4 H4.6Z" fill="url(#gb)"/></svg><svg class="tx" style="left:133.3px;top:318.9px" width="65" height="18" fill="#222"><text x="0" y="13" font-size="11" textLength="62" lengthAdjust="spacingAndGlyphs">ボディ上面・右</text></svg><div class="row" style="left:76px;top:342.2px;width:130.8px;height:19.6px;"></div><svg style="left:79.2px;top:346px" width="16" height="12" viewBox="0 0 16 12" style="overflow:visible"><path d="M0 6 Q8 -4.6 16 6 Q8 16.6 0 6Z" fill="#9b9b9b"/><circle cx="8" cy="6" r="3.7" fill="#f1f1f1"/><circle cx="8" cy="6" r="2.15" fill="#9b9b9b"/></svg><svg style="left:104px;top:344px" width="16" height="16" viewBox="0 0 16 16"><defs><linearGradient id="gb" x1="0" x2="1"><stop offset="0" stop-color="#fdfdfe"/><stop offset="0.5" stop-color="#dfe3ea"/><stop offset="1" stop-color="#b3bac7"/></linearGradient></defs><rect x="0.6" y="0.6" width="14.8" height="14.8" rx="4.6" fill="#fff" stroke="#3b4456" stroke-width="1.1"/><path d="M4.6 5.8 H14.3 V11 Q14.3 14.4 10.5 14.4 H4.6Z" fill="url(#gb)"/></svg><svg class="tx" style="left:133.3px;top:342.9px" width="65" height="18" fill="#222"><text x="0" y="13" font-size="11" textLength="62" lengthAdjust="spacingAndGlyphs">ボディ上面・中</text></svg><div class="row" style="left:76px;top:366.2px;width:130.8px;height:19.6px;"></div><svg style="left:79.2px;top:370px" width="16" height="12" viewBox="0 0 16 12" style="overflow:visible"><path d="M0 6 Q8 -4.6 16 6 Q8 16.6 0 6Z" fill="#9b9b9b"/><circle cx="8" cy="6" r="3.7" fill="#f1f1f1"/><circle cx="8" cy="6" r="2.15" fill="#9b9b9b"/></svg><svg style="left:104px;top:368px" width="16" height="16" viewBox="0 0 16 16"><defs><linearGradient id="gb" x1="0" x2="1"><stop offset="0" stop-color="#fdfdfe"/><stop offset="0.5" stop-color="#dfe3ea"/><stop offset="1" stop-color="#b3bac7"/></linearGradient></defs><rect x="0.6" y="0.6" width="14.8" height="14.8" rx="4.6" fill="#fff" stroke="#3b4456" stroke-width="1.1"/><path d="M4.6 5.8 H14.3 V11 Q14.3 14.4 10.5 14.4 H4.6Z" fill="url(#gb)"/></svg><svg class="tx" style="left:133.3px;top:366.9px" width="65" height="18" fill="#222"><text x="0" y="13" font-size="11" textLength="62" lengthAdjust="spacingAndGlyphs">ボディ上面・左</text></svg><div class="row" style="left:76px;top:390.2px;width:146.6px;height:19.6px;"></div><svg style="left:79.2px;top:394px" width="16" height="12" viewBox="0 0 16 12" style="overflow:visible"><path d="M0 6 Q8 -4.6 16 6 Q8 16.6 0 6Z" fill="#9b9b9b"/><circle cx="8" cy="6" r="3.7" fill="#f1f1f1"/><circle cx="8" cy="6" r="2.15" fill="#9b9b9b"/></svg><svg style="left:104px;top:392px" width="16" height="16" viewBox="0 0 16 16"><defs><linearGradient id="gb" x1="0" x2="1"><stop offset="0" stop-color="#fdfdfe"/><stop offset="0.5" stop-color="#dfe3ea"/><stop offset="1" stop-color="#b3bac7"/></linearGradient></defs><rect x="0.6" y="0.6" width="14.8" height="14.8" rx="4.6" fill="#fff" stroke="#3b4456" stroke-width="1.1"/><path d="M4.6 5.8 H14.3 V11 Q14.3 14.4 10.5 14.4 H4.6Z" fill="url(#gb)"/></svg><svg class="tx" style="left:133.3px;top:390.9px" width="83" height="18" fill="#222"><text x="0" y="13" font-size="11" textLength="81" lengthAdjust="spacingAndGlyphs">ボディ底面・前 (1)</text></svg><div class="row" style="left:76px;top:414.2px;width:130.8px;height:19.6px;"></div><svg style="left:79.2px;top:418px" width="16" height="12" viewBox="0 0 16 12" style="overflow:visible"><path d="M0 6 Q8 -4.6 16 6 Q8 16.6 0 6Z" fill="#9b9b9b"/><circle cx="8" cy="6" r="3.7" fill="#f1f1f1"/><circle cx="8" cy="6" r="2.15" fill="#9b9b9b"/></svg><svg style="left:104px;top:416px" width="16" height="16" viewBox="0 0 16 16"><defs><linearGradient id="gb" x1="0" x2="1"><stop offset="0" stop-color="#fdfdfe"/><stop offset="0.5" stop-color="#dfe3ea"/><stop offset="1" stop-color="#b3bac7"/></linearGradient></defs><rect x="0.6" y="0.6" width="14.8" height="14.8" rx="4.6" fill="#fff" stroke="#3b4456" stroke-width="1.1"/><path d="M4.6 5.8 H14.3 V11 Q14.3 14.4 10.5 14.4 H4.6Z" fill="url(#gb)"/></svg><svg class="tx" style="left:133.3px;top:414.9px" width="65" height="18" fill="#222"><text x="0" y="13" font-size="11" textLength="62" lengthAdjust="spacingAndGlyphs">ボディ底面・中</text></svg><div class="row" style="left:76px;top:438.2px;width:130.8px;height:19.6px;"></div><svg style="left:79.2px;top:442px" width="16" height="12" viewBox="0 0 16 12" style="overflow:visible"><path d="M0 6 Q8 -4.6 16 6 Q8 16.6 0 6Z" fill="#9b9b9b"/><circle cx="8" cy="6" r="3.7" fill="#f1f1f1"/><circle cx="8" cy="6" r="2.15" fill="#9b9b9b"/></svg><svg style="left:104px;top:440px" width="16" height="16" viewBox="0 0 16 16"><defs><linearGradient id="gb" x1="0" x2="1"><stop offset="0" stop-color="#fdfdfe"/><stop offset="0.5" stop-color="#dfe3ea"/><stop offset="1" stop-color="#b3bac7"/></linearGradient></defs><rect x="0.6" y="0.6" width="14.8" height="14.8" rx="4.6" fill="#fff" stroke="#3b4456" stroke-width="1.1"/><path d="M4.6 5.8 H14.3 V11 Q14.3 14.4 10.5 14.4 H4.6Z" fill="url(#gb)"/></svg><svg class="tx" style="left:133.3px;top:438.9px" width="65" height="18" fill="#222"><text x="0" y="13" font-size="11" textLength="62" lengthAdjust="spacingAndGlyphs">ボディ底面・後</text></svg><div class="row" style="left:76px;top:462.2px;width:126.6px;height:19.6px;"></div><svg style="left:79.2px;top:466px" width="16" height="12" viewBox="0 0 16 12" style="overflow:visible"><path d="M0 6 Q8 -4.6 16 6 Q8 16.6 0 6Z" fill="#9b9b9b"/><circle cx="8" cy="6" r="3.7" fill="#f1f1f1"/><circle cx="8" cy="6" r="2.15" fill="#9b9b9b"/></svg><svg style="left:104px;top:464px" width="16" height="16" viewBox="0 0 16 16"><defs><linearGradient id="gb" x1="0" x2="1"><stop offset="0" stop-color="#fdfdfe"/><stop offset="0.5" stop-color="#dfe3ea"/><stop offset="1" stop-color="#b3bac7"/></linearGradient></defs><rect x="0.6" y="0.6" width="14.8" height="14.8" rx="4.6" fill="#fff" stroke="#3b4456" stroke-width="1.1"/><path d="M4.6 5.8 H14.3 V11 Q14.3 14.4 10.5 14.4 H4.6Z" fill="url(#gb)"/></svg><svg class="tx" style="left:133.3px;top:462.9px" width="61" height="18" fill="#222"><text x="0" y="13" font-size="11" textLength="58.5" lengthAdjust="spacingAndGlyphs">ボタン・リセット</text></svg><div class="row" style="left:76px;top:486.2px;width:126.6px;height:19.6px;"></div><svg style="left:79.2px;top:490px" width="16" height="12" viewBox="0 0 16 12" style="overflow:visible"><path d="M0 6 Q8 -4.6 16 6 Q8 16.6 0 6Z" fill="#9b9b9b"/><circle cx="8" cy="6" r="3.7" fill="#f1f1f1"/><circle cx="8" cy="6" r="2.15" fill="#9b9b9b"/></svg><svg style="left:104px;top:488px" width="16" height="16" viewBox="0 0 16 16"><defs><linearGradient id="gb" x1="0" x2="1"><stop offset="0" stop-color="#fdfdfe"/><stop offset="0.5" stop-color="#dfe3ea"/><stop offset="1" stop-color="#b3bac7"/></linearGradient></defs><rect x="0.6" y="0.6" width="14.8" height="14.8" rx="4.6" fill="#fff" stroke="#3b4456" stroke-width="1.1"/><path d="M4.6 5.8 H14.3 V11 Q14.3 14.4 10.5 14.4 H4.6Z" fill="url(#gb)"/></svg><svg class="tx" style="left:133.3px;top:486.9px" width="59" height="18" fill="#222"><text x="0" y="13" font-size="11" textLength="56.5" lengthAdjust="spacingAndGlyphs">フロントパネル</text></svg><div class="row" style="left:76px;top:510.2px;width:198.6px;height:19.6px;"></div><svg style="left:79.2px;top:514px" width="16" height="12" viewBox="0 0 16 12" style="overflow:visible"><path d="M0 6 Q8 -4.6 16 6 Q8 16.6 0 6Z" fill="#9b9b9b"/><circle cx="8" cy="6" r="3.7" fill="#f1f1f1"/><circle cx="8" cy="6" r="2.15" fill="#9b9b9b"/></svg><svg style="left:104px;top:512px" width="16" height="16" viewBox="0 0 16 16"><defs><linearGradient id="gb" x1="0" x2="1"><stop offset="0" stop-color="#fdfdfe"/><stop offset="0.5" stop-color="#dfe3ea"/><stop offset="1" stop-color="#b3bac7"/></linearGradient></defs><rect x="0.6" y="0.6" width="14.8" height="14.8" rx="4.6" fill="#fff" stroke="#3b4456" stroke-width="1.1"/><path d="M4.6 5.8 H14.3 V11 Q14.3 14.4 10.5 14.4 H4.6Z" fill="url(#gb)"/></svg><svg class="tx" style="left:133.3px;top:510.9px" width="133" height="18" fill="#222"><text x="0" y="13" font-size="11" textLength="130.8" lengthAdjust="spacingAndGlyphs">フロントパネル・カートリッジ外枠</text></svg><div class="row" style="left:76px;top:534.2px;width:198.6px;height:19.6px;"></div><svg style="left:79.2px;top:538px" width="16" height="12" viewBox="0 0 16 12" style="overflow:visible"><path d="M0 6 Q8 -4.6 16 6 Q8 16.6 0 6Z" fill="#9b9b9b"/><circle cx="8" cy="6" r="3.7" fill="#f1f1f1"/><circle cx="8" cy="6" r="2.15" fill="#9b9b9b"/></svg><svg style="left:104px;top:536px" width="16" height="16" viewBox="0 0 16 16"><defs><linearGradient id="gb" x1="0" x2="1"><stop offset="0" stop-color="#fdfdfe"/><stop offset="0.5" stop-color="#dfe3ea"/><stop offset="1" stop-color="#b3bac7"/></linearGradient></defs><rect x="0.6" y="0.6" width="14.8" height="14.8" rx="4.6" fill="#fff" stroke="#3b4456" stroke-width="1.1"/><path d="M4.6 5.8 H14.3 V11 Q14.3 14.4 10.5 14.4 H4.6Z" fill="url(#gb)"/></svg><svg class="tx" style="left:133.3px;top:534.9px" width="133" height="18" fill="#222"><text x="0" y="13" font-size="11" textLength="130.8" lengthAdjust="spacingAndGlyphs">フロントパネル・カートリッジ内枠</text></svg><div class="row" style="left:76px;top:558.2px;width:130.8px;height:19.6px;"></div><svg style="left:79.2px;top:562px" width="16" height="12" viewBox="0 0 16 12" style="overflow:visible"><path d="M0 6 Q8 -4.6 16 6 Q8 16.6 0 6Z" fill="#9b9b9b"/><circle cx="8" cy="6" r="3.7" fill="#f1f1f1"/><circle cx="8" cy="6" r="2.15" fill="#9b9b9b"/></svg><svg style="left:104px;top:560px" width="16" height="16" viewBox="0 0 16 16"><defs><linearGradient id="gb" x1="0" x2="1"><stop offset="0" stop-color="#fdfdfe"/><stop offset="0.5" stop-color="#dfe3ea"/><stop offset="1" stop-color="#b3bac7"/></linearGradient></defs><rect x="0.6" y="0.6" width="14.8" height="14.8" rx="4.6" fill="#fff" stroke="#3b4456" stroke-width="1.1"/><path d="M4.6 5.8 H14.3 V11 Q14.3 14.4 10.5 14.4 H4.6Z" fill="url(#gb)"/></svg><svg class="tx" style="left:133.3px;top:558.9px" width="65" height="18" fill="#222"><text x="0" y="13" font-size="11" textLength="62" lengthAdjust="spacingAndGlyphs">カートリッジ・蓋</text></svg><div class="row" style="left:76px;top:582.2px;width:126.6px;height:19.6px;"></div><svg style="left:79.2px;top:586px" width="16" height="12" viewBox="0 0 16 12" style="overflow:visible"><path d="M0 6 Q8 -4.6 16 6 Q8 16.6 0 6Z" fill="#9b9b9b"/><circle cx="8" cy="6" r="3.7" fill="#f1f1f1"/><circle cx="8" cy="6" r="2.15" fill="#9b9b9b"/></svg><svg style="left:104px;top:584px" width="16" height="16" viewBox="0 0 16 16"><defs><linearGradient id="gb" x1="0" x2="1"><stop offset="0" stop-color="#fdfdfe"/><stop offset="0.5" stop-color="#dfe3ea"/><stop offset="1" stop-color="#b3bac7"/></linearGradient></defs><rect x="0.6" y="0.6" width="14.8" height="14.8" rx="4.6" fill="#fff" stroke="#3b4456" stroke-width="1.1"/><path d="M4.6 5.8 H14.3 V11 Q14.3 14.4 10.5 14.4 H4.6Z" fill="url(#gb)"/></svg><svg class="tx" style="left:134px;top:582.9px" width="60" height="18" fill="#222"><text x="0" y="13" font-size="11" textLength="57" lengthAdjust="spacingAndGlyphs">LED・Power</text></svg><div class="row" style="left:76px;top:606.2px;width:130.8px;height:19.6px;"></div><svg style="left:79.2px;top:610px" width="16" height="12" viewBox="0 0 16 12" style="overflow:visible"><path d="M0 6 Q8 -4.6 16 6 Q8 16.6 0 6Z" fill="#9b9b9b"/><circle cx="8" cy="6" r="3.7" fill="#f1f1f1"/><circle cx="8" cy="6" r="2.15" fill="#9b9b9b"/></svg><svg style="left:104px;top:608px" width="16" height="16" viewBox="0 0 16 16"><defs><linearGradient id="gb" x1="0" x2="1"><stop offset="0" stop-color="#fdfdfe"/><stop offset="0.5" stop-color="#dfe3ea"/><stop offset="1" stop-color="#b3bac7"/></linearGradient></defs><rect x="0.6" y="0.6" width="14.8" height="14.8" rx="4.6" fill="#fff" stroke="#3b4456" stroke-width="1.1"/><path d="M4.6 5.8 H14.3 V11 Q14.3 14.4 10.5 14.4 H4.6Z" fill="url(#gb)"/></svg><svg class="tx" style="left:133.3px;top:606.9px" width="66" height="18" fill="#222"><text x="0" y="13" font-size="11" textLength="63.7" lengthAdjust="spacingAndGlyphs">ボタン・Power</text></svg><div class="row" style="left:76px;top:630.2px;width:162.7px;height:19.6px;"></div><svg style="left:79.2px;top:634px" width="16" height="12" viewBox="0 0 16 12" style="overflow:visible"><path d="M0 6 Q8 -4.6 16 6 Q8 16.6 0 6Z" fill="#9b9b9b"/><circle cx="8" cy="6" r="3.7" fill="#f1f1f1"/><circle cx="8" cy="6" r="2.15" fill="#9b9b9b"/></svg><svg style="left:104px;top:632px" width="16" height="16" viewBox="0 0 16 16"><defs><linearGradient id="gb" x1="0" x2="1"><stop offset="0" stop-color="#fdfdfe"/><stop offset="0.5" stop-color="#dfe3ea"/><stop offset="1" stop-color="#b3bac7"/></linearGradient></defs><rect x="0.6" y="0.6" width="14.8" height="14.8" rx="4.6" fill="#fff" stroke="#3b4456" stroke-width="1.1"/><path d="M4.6 5.8 H14.3 V11 Q14.3 14.4 10.5 14.4 H4.6Z" fill="url(#gb)"/></svg><svg class="tx" style="left:133.3px;top:630.9px" width="98" height="18" fill="#222"><text x="0" y="13" font-size="11" textLength="95.6" lengthAdjust="spacingAndGlyphs">ボタン・ビデオオーディオ</text></svg><div class="row" style="left:76px;top:654.2px;width:150.8px;height:19.6px;"></div><svg style="left:79.2px;top:658px" width="16" height="12" viewBox="0 0 16 12" style="overflow:visible"><path d="M0 6 Q8 -4.6 16 6 Q8 16.6 0 6Z" fill="#9b9b9b"/><circle cx="8" cy="6" r="3.7" fill="#f1f1f1"/><circle cx="8" cy="6" r="2.15" fill="#9b9b9b"/></svg><svg style="left:104px;top:656px" width="16" height="16" viewBox="0 0 16 16"><defs><linearGradient id="gb" x1="0" x2="1"><stop offset="0" stop-color="#fdfdfe"/><stop offset="0.5" stop-color="#dfe3ea"/><stop offset="1" stop-color="#b3bac7"/></linearGradient></defs><rect x="0.6" y="0.6" width="14.8" height="14.8" rx="4.6" fill="#fff" stroke="#3b4456" stroke-width="1.1"/><path d="M4.6 5.8 H14.3 V11 Q14.3 14.4 10.5 14.4 H4.6Z" fill="url(#gb)"/></svg><svg class="tx" style="left:133.3px;top:654.9px" width="87" height="18" fill="#222"><text x="0" y="13" font-size="11" textLength="84.3" lengthAdjust="spacingAndGlyphs">ジョイスティックポート</text></svg><div class="row" style="left:76px;top:678.2px;width:142.8px;height:19.6px;"></div><svg style="left:79.2px;top:682px" width="16" height="12" viewBox="0 0 16 12" style="overflow:visible"><path d="M0 6 Q8 -4.6 16 6 Q8 16.6 0 6Z" fill="#9b9b9b"/><circle cx="8" cy="6" r="3.7" fill="#f1f1f1"/><circle cx="8" cy="6" r="2.15" fill="#9b9b9b"/></svg><svg style="left:104px;top:680px" width="16" height="16" viewBox="0 0 16 16"><defs><linearGradient id="gb" x1="0" x2="1"><stop offset="0" stop-color="#fdfdfe"/><stop offset="0.5" stop-color="#dfe3ea"/><stop offset="1" stop-color="#b3bac7"/></linearGradient></defs><rect x="0.6" y="0.6" width="14.8" height="14.8" rx="4.6" fill="#fff" stroke="#3b4456" stroke-width="1.1"/><path d="M4.6 5.8 H14.3 V11 Q14.3 14.4 10.5 14.4 H4.6Z" fill="url(#gb)"/></svg><svg class="tx" style="left:133.3px;top:678.9px" width="76" height="18" fill="#222"><text x="0" y="13" font-size="11" textLength="73.5" lengthAdjust="spacingAndGlyphs">ヘッドフォンジャック</text></svg><div class="row" style="left:76px;top:702.2px;width:90.5px;height:19.6px;"></div><svg style="left:79.2px;top:706px" width="16" height="12" viewBox="0 0 16 12" style="overflow:visible"><path d="M0 6 Q8 -4.6 16 6 Q8 16.6 0 6Z" fill="#9b9b9b"/><circle cx="8" cy="6" r="3.7" fill="#f1f1f1"/><circle cx="8" cy="6" r="2.15" fill="#9b9b9b"/></svg><svg style="left:104px;top:704px" width="16" height="16" viewBox="0 0 16 16"><defs><linearGradient id="gb" x1="0" x2="1"><stop offset="0" stop-color="#fdfdfe"/><stop offset="0.5" stop-color="#dfe3ea"/><stop offset="1" stop-color="#b3bac7"/></linearGradient></defs><rect x="0.6" y="0.6" width="14.8" height="14.8" rx="4.6" fill="#fff" stroke="#3b4456" stroke-width="1.1"/><path d="M4.6 5.8 H14.3 V11 Q14.3 14.4 10.5 14.4 H4.6Z" fill="url(#gb)"/></svg><svg class="tx" style="left:133.3px;top:702.9px" width="24" height="18" fill="#222"><text x="0" y="13" font-size="11" textLength="21" lengthAdjust="spacingAndGlyphs">音量</text></svg><div class="row" style="left:76px;top:726.2px;width:134.6px;height:19.6px;"></div><svg style="left:79.2px;top:730px" width="16" height="12" viewBox="0 0 16 12" style="overflow:visible"><path d="M0 6 Q8 -4.6 16 6 Q8 16.6 0 6Z" fill="#9b9b9b"/><circle cx="8" cy="6" r="3.7" fill="#f1f1f1"/><circle cx="8" cy="6" r="2.15" fill="#9b9b9b"/></svg><svg style="left:104px;top:728px" width="16" height="16" viewBox="0 0 16 16"><defs><linearGradient id="gb" x1="0" x2="1"><stop offset="0" stop-color="#fdfdfe"/><stop offset="0.5" stop-color="#dfe3ea"/><stop offset="1" stop-color="#b3bac7"/></linearGradient></defs><rect x="0.6" y="0.6" width="14.8" height="14.8" rx="4.6" fill="#fff" stroke="#3b4456" stroke-width="1.1"/><path d="M4.6 5.8 H14.3 V11 Q14.3 14.4 10.5 14.4 H4.6Z" fill="url(#gb)"/></svg><svg class="tx" style="left:133.3px;top:726.9px" width="68" height="18" fill="#222"><text x="0" y="13" font-size="11" textLength="65.5" lengthAdjust="spacingAndGlyphs">ミキシングレベル</text></svg><div class="row" style="left:76px;top:750.2px;width:83px;height:19.6px;"></div><svg style="left:79.2px;top:754px" width="16" height="12" viewBox="0 0 16 12" style="overflow:visible"><path d="M0 6 Q8 -4.6 16 6 Q8 16.6 0 6Z" fill="#9b9b9b"/><circle cx="8" cy="6" r="3.7" fill="#f1f1f1"/><circle cx="8" cy="6" r="2.15" fill="#9b9b9b"/></svg><svg style="left:104px;top:752px" width="16" height="16" viewBox="0 0 16 16"><defs><linearGradient id="gb" x1="0" x2="1"><stop offset="0" stop-color="#fdfdfe"/><stop offset="0.5" stop-color="#dfe3ea"/><stop offset="1" stop-color="#b3bac7"/></linearGradient></defs><rect x="0.6" y="0.6" width="14.8" height="14.8" rx="4.6" fill="#fff" stroke="#3b4456" stroke-width="1.1"/><path d="M4.6 5.8 H14.3 V11 Q14.3 14.4 10.5 14.4 H4.6Z" fill="url(#gb)"/></svg><svg class="tx" style="left:134px;top:750.9px" width="19" height="18" fill="#222"><text x="0" y="13" font-size="11" textLength="16.3" lengthAdjust="spacingAndGlyphs">足1</text></svg><div class="row" style="left:76px;top:774.2px;width:86.7px;height:19.6px;"></div><svg style="left:79.2px;top:778px" width="16" height="12" viewBox="0 0 16 12" style="overflow:visible"><path d="M0 6 Q8 -4.6 16 6 Q8 16.6 0 6Z" fill="#9b9b9b"/><circle cx="8" cy="6" r="3.7" fill="#f1f1f1"/><circle cx="8" cy="6" r="2.15" fill="#9b9b9b"/></svg><svg style="left:104px;top:776px" width="16" height="16" viewBox="0 0 16 16"><defs><linearGradient id="gb" x1="0" x2="1"><stop offset="0" stop-color="#fdfdfe"/><stop offset="0.5" stop-color="#dfe3ea"/><stop offset="1" stop-color="#b3bac7"/></linearGradient></defs><rect x="0.6" y="0.6" width="14.8" height="14.8" rx="4.6" fill="#fff" stroke="#3b4456" stroke-width="1.1"/><path d="M4.6 5.8 H14.3 V11 Q14.3 14.4 10.5 14.4 H4.6Z" fill="url(#gb)"/></svg><svg class="tx" style="left:134px;top:774.9px" width="19" height="18" fill="#222"><text x="0" y="13" font-size="11" textLength="16.7" lengthAdjust="spacingAndGlyphs">足2</text></svg><div class="row" style="left:76px;top:798.2px;width:86.7px;height:19.6px;"></div><svg style="left:79.2px;top:802px" width="16" height="12" viewBox="0 0 16 12" style="overflow:visible"><path d="M0 6 Q8 -4.6 16 6 Q8 16.6 0 6Z" fill="#9b9b9b"/><circle cx="8" cy="6" r="3.7" fill="#f1f1f1"/><circle cx="8" cy="6" r="2.15" fill="#9b9b9b"/></svg><svg style="left:104px;top:800px" width="16" height="16" viewBox="0 0 16 16"><defs><linearGradient id="gb" x1="0" x2="1"><stop offset="0" stop-color="#fdfdfe"/><stop offset="0.5" stop-color="#dfe3ea"/><stop offset="1" stop-color="#b3bac7"/></linearGradient></defs><rect x="0.6" y="0.6" width="14.8" height="14.8" rx="4.6" fill="#fff" stroke="#3b4456" stroke-width="1.1"/><path d="M4.6 5.8 H14.3 V11 Q14.3 14.4 10.5 14.4 H4.6Z" fill="url(#gb)"/></svg><svg class="tx" style="left:134px;top:798.9px" width="19" height="18" fill="#222"><text x="0" y="13" font-size="11" textLength="16.7" lengthAdjust="spacingAndGlyphs">足3</text></svg><div class="row" style="left:76px;top:822.2px;width:86.7px;height:19.6px;"></div><svg style="left:79.2px;top:826px" width="16" height="12" viewBox="0 0 16 12" style="overflow:visible"><path d="M0 6 Q8 -4.6 16 6 Q8 16.6 0 6Z" fill="#9b9b9b"/><circle cx="8" cy="6" r="3.7" fill="#f1f1f1"/><circle cx="8" cy="6" r="2.15" fill="#9b9b9b"/></svg><svg style="left:104px;top:824px" width="16" height="16" viewBox="0 0 16 16"><defs><linearGradient id="gb" x1="0" x2="1"><stop offset="0" stop-color="#fdfdfe"/><stop offset="0.5" stop-color="#dfe3ea"/><stop offset="1" stop-color="#b3bac7"/></linearGradient></defs><rect x="0.6" y="0.6" width="14.8" height="14.8" rx="4.6" fill="#fff" stroke="#3b4456" stroke-width="1.1"/><path d="M4.6 5.8 H14.3 V11 Q14.3 14.4 10.5 14.4 H4.6Z" fill="url(#gb)"/></svg><svg class="tx" style="left:134px;top:822.9px" width="19" height="18" fill="#222"><text x="0" y="13" font-size="11" textLength="16.7" lengthAdjust="spacingAndGlyphs">足4</text></svg><div class="row" style="left:58.3px;top:846.2px;width:110.2px;height:19.6px;"></div><svg style="left:40px;top:849.5px" width="10" height="13" viewBox="0 0 10 13"><path d="M1 0.8 L8.8 6.5 L1 12.2Z" fill="#f4f4f4" stroke="#333" stroke-width="1.3" stroke-linejoin="round"/></svg><svg style="left:61px;top:850px" width="16" height="12" viewBox="0 0 16 12" style="overflow:visible"><path d="M0 6 Q8 -4.6 16 6 Q8 16.6 0 6Z" fill="#9b9b9b"/><circle cx="8" cy="6" r="3.7" fill="#f1f1f1"/><circle cx="8" cy="6" r="2.15" fill="#9b9b9b"/></svg><svg style="left:85.7px;top:850px" width="17" height="13" viewBox="0 0 17 13"><path d="M0.5 1.2 H6.2 L7.4 2.8 H16.3 V12.6 H0.5Z" fill="#a2a2a2"/><path d="M0.5 3.6H16.3" stroke="#b9b9b9" stroke-width="0.8"/></svg><svg class="tx" style="left:115.5px;top:846.9px" width="43" height="18" fill="#222"><text x="0" y="13" font-size="11" textLength="40.5" lengthAdjust="spacingAndGlyphs">キャンバス</text></svg><div class="row" style="left:58.3px;top:870.2px;width:98.4px;height:19.6px;"></div><svg style="left:40px;top:873.5px" width="10" height="13" viewBox="0 0 10 13"><path d="M1 0.8 L8.8 6.5 L1 12.2Z" fill="#f4f4f4" stroke="#333" stroke-width="1.3" stroke-linejoin="round"/></svg><svg style="left:61px;top:874px" width="16" height="12" viewBox="0 0 16 12" style="overflow:visible"><path d="M0 6 Q8 -4.6 16 6 Q8 16.6 0 6Z" fill="#9b9b9b"/><circle cx="8" cy="6" r="3.7" fill="#f1f1f1"/><circle cx="8" cy="6" r="2.15" fill="#9b9b9b"/></svg><svg style="left:85.7px;top:874px" width="17" height="13" viewBox="0 0 17 13"><path d="M0.5 1.2 H6.2 L7.4 2.8 H16.3 V12.6 H0.5Z" fill="#a2a2a2"/><path d="M0.5 3.6H16.3" stroke="#b9b9b9" stroke-width="0.8"/></svg><svg class="tx" style="left:115.5px;top:870.9px" width="33" height="18" fill="#222"><text x="0" y="13" font-size="11" textLength="30.5" lengthAdjust="spacingAndGlyphs">スケッチ</text></svg><div class="row" style="left:58.3px;top:894.2px;width:138.5px;height:19.6px;"></div><svg style="left:40px;top:897.5px" width="10" height="13" viewBox="0 0 10 13"><path d="M1 0.8 L8.8 6.5 L1 12.2Z" fill="#f4f4f4" stroke="#333" stroke-width="1.3" stroke-linejoin="round"/></svg><svg style="left:61px;top:898px" width="16" height="12" viewBox="0 0 16 12" style="overflow:visible"><path d="M0 6 Q8 -4.6 16 6 Q8 16.6 0 6Z" fill="#9b9b9b"/><circle cx="8" cy="6" r="3.7" fill="#f1f1f1"/><circle cx="8" cy="6" r="2.15" fill="#9b9b9b"/></svg><svg style="left:85.7px;top:898px" width="17" height="13" viewBox="0 0 17 13"><path d="M0.5 1.2 H6.2 L7.4 2.8 H16.3 V12.6 H0.5Z" fill="#a2a2a2"/><path d="M0.5 3.6H16.3" stroke="#b9b9b9" stroke-width="0.8"/></svg><svg class="tx" style="left:115.5px;top:894.9px" width="73" height="18" fill="#222"><text x="0" y="13" font-size="11" textLength="70.5" lengthAdjust="spacingAndGlyphs">コンストラクション</text></svg><div class="row" style="left:58.3px;top:918.2px;width:105.5px;height:19.6px;"></div><svg style="left:61px;top:920px" width="17" height="17" viewBox="0 0 17 17"><path d="M0.5 12.5 L3 10.5 H12 L12 14 L9.5 16 H0.5Z" fill="#c9c9c9"/><path d="M0.5 3 L3 0.8 H12 V11 L9.5 13 H0.5Z" fill="#5aa5df"/><path d="M0.5 3 H9.5 V13 H0.5Z" fill="#69b1e8"/><path d="M9.5 3 L12 0.8 V11 L9.5 13Z" fill="#3f8ccb"/><path d="M15 2 V12.5 M13.3 3.8 L15 1 L16.7 3.8" stroke="#222" stroke-width="1" fill="none"/></svg><svg class="tx" style="left:90.7px;top:918.9px" width="64" height="18" fill="#222"><text x="0" y="13" font-size="11" textLength="61.9" lengthAdjust="spacingAndGlyphs">押し出し2933</text></svg><div class="row" style="left:58.3px;top:942.2px;width:105.5px;height:19.6px;"></div><svg style="left:61px;top:944px" width="17" height="17" viewBox="0 0 17 17"><path d="M0.5 12.5 L3 10.5 H12 L12 14 L9.5 16 H0.5Z" fill="#c9c9c9"/><path d="M0.5 3 L3 0.8 H12 V11 L9.5 13 H0.5Z" fill="#5aa5df"/><path d="M0.5 3 H9.5 V13 H0.5Z" fill="#69b1e8"/><path d="M9.5 3 L12 0.8 V11 L9.5 13Z" fill="#3f8ccb"/><path d="M15 2 V12.5 M13.3 3.8 L15 1 L16.7 3.8" stroke="#222" stroke-width="1" fill="none"/></svg><svg class="tx" style="left:90.7px;top:942.9px" width="64" height="18" fill="#222"><text x="0" y="13" font-size="11" textLength="61.9" lengthAdjust="spacingAndGlyphs">押し出し2935</text></svg><div class="row" style="left:58.3px;top:966.2px;width:101.4px;height:19.6px;"></div><svg style="left:61px;top:968px" width="17" height="17" viewBox="0 0 17 17"><path d="M0.5 12.5 L3 10.5 H12 L12 14 L9.5 16 H0.5Z" fill="#c9c9c9"/><path d="M0.5 3 L3 0.8 H12 V11 L9.5 13 H0.5Z" fill="#5aa5df"/><path d="M0.5 3 H9.5 V13 H0.5Z" fill="#69b1e8"/><path d="M9.5 3 L12 0.8 V11 L9.5 13Z" fill="#3f8ccb"/><path d="M15 2 V12.5 M13.3 3.8 L15 1 L16.7 3.8" stroke="#222" stroke-width="1" fill="none"/></svg><svg class="tx" style="left:90.7px;top:966.9px" width="64" height="18" fill="#222"><text x="0" y="13" font-size="11" textLength="61.1" lengthAdjust="spacingAndGlyphs">押し出し2961</text></svg><div style="left:4.4px;top:1011.5px;width:299.4px;height:24.2px;background:#f2f2f2;border:1px solid #c6c6c6"></div><svg class="tx" style="left:27.5px;top:1014px" width="34" height="18" fill="#333"><text x="0" y="13" font-size="11" textLength="31.5" lengthAdjust="spacingAndGlyphs">コメント</text></svg><svg style="left:282.5px;top:1018.5px" width="9.6" height="9.6" viewBox="0 0 9.6 9.6"><circle cx="4.8" cy="4.8" r="4.7" fill="#111"/><path d="M4.8 2V7.6M2 4.8H7.6" stroke="#fff" stroke-width="1.4"/></svg><div style="left:299px;top:1018px;width:1px;height:10px;background:#555"></div><div style="left:301px;top:1019px;width:1px;height:8px;background:#999"></div><div style="left:841px;top:1012px;width:237px;height:23.5px;background:#f1f1f1"></div><svg style="left:844px;top:1015.5px" width="16" height="17" viewBox="0 0 16 17"><path d="M8 1 V16" stroke="#2d3a55" stroke-width="2.6"/><path d="M8 1 V16" stroke="#fff" stroke-width="1"/><path d="M5.2 3.8 L8 0.3 L10.8 3.8Z" fill="#fff" stroke="#2d3a55" stroke-width="0.9"/><path d="M10.5 6.2 Q15.5 7.2 15 9.6 Q14 12.3 6 12 " fill="none" stroke="#222" stroke-width="1.4"/><path d="M5.5 6.3 Q1.3 7 1.2 9" fill="none" stroke="#222" stroke-width="1.3"/><path d="M6.5 9.5 L2 12 L6.8 14.5Z" fill="#222"/></svg><svg style="left:865.5px;top:1022.6px" width="5.2" height="3.2" viewBox="0 0 5.2 3.2"><path d="M0 0H5.2 L2.6 3.2 Z" fill="#222"/></svg><svg style="left:877px;top:1016px" width="16.5" height="16" viewBox="0 0 16.5 16"><path d="M1 6 H15.5 V15.3 H1Z" fill="#f6f6f6" stroke="#2d3a55" stroke-width="1.3"/><path d="M2.5 6 L5.5 1 L7.5 3 L9.5 1.2 L11 2.4 L12.8 0.8 V6" fill="#e4e4e4" stroke="#2d3a55" stroke-width="1"/><rect x="4" y="9" width="8.6" height="3.4" fill="#b4bdd0" stroke="#2d3a55" stroke-width="1"/></svg><svg style="left:903px;top:1016px" width="16.5" height="16.5" viewBox="0 0 16.5 16.5"><path d="M4.3 9.5 V3.2 Q4.3 2 5.3 2 Q6.3 2 6.3 3.2 V1.6 Q6.3 0.5 7.4 0.5 Q8.5 0.5 8.5 1.6 V2.2 Q8.5 1.2 9.6 1.2 Q10.7 1.2 10.7 2.4 V3.6 Q10.7 2.8 11.7 2.8 Q12.7 2.8 12.7 4 V11 Q12.7 16 8.5 16 Q5.5 16 4 13 L1 8.8 Q0.5 7.8 1.5 7.4 Q2.5 7 3.3 8.2Z" fill="#f4f6fa" stroke="#2d3a55" stroke-width="1" stroke-linejoin="round"/><path d="M6.3 3V8 M8.5 2.4V8 M10.7 3.6V8" stroke="#2d3a55" stroke-width="0.8"/></svg><svg style="left:929px;top:1015.5px" width="17" height="16" viewBox="0 0 17 16"><circle cx="5.8" cy="7.8" r="4.6" fill="#dfeaf2" stroke="#2d3a55" stroke-width="1.3"/><path d="M9.3 11.2 L13 14.8" stroke="#2d3a55" stroke-width="2.6" stroke-linecap="round"/><path d="M11.6 2.8 H16 M13.8 0.6 V5 M11.6 7 H16" stroke="#222" stroke-width="1.1"/></svg><svg style="left:955px;top:1016px" width="17" height="16.5" viewBox="0 0 17 16.5"><rect x="0.6" y="0.6" width="14.5" height="14.5" fill="none" stroke="#333" stroke-width="1" stroke-dasharray="2 1.6"/><circle cx="7" cy="6.6" r="5.6" fill="#dfeaf2" stroke="#2d3a55" stroke-width="1.3"/><path d="M11 10.8 L15 14.8" stroke="#2d3a55" stroke-width="2.8" stroke-linecap="round"/></svg><svg style="left:977px;top:1022.6px" width="5.2" height="3.2" viewBox="0 0 5.2 3.2"><path d="M0 0H5.2 L2.6 3.2 Z" fill="#222"/></svg><svg style="left:988px;top:1016px" width="16.5" height="16" viewBox="0 0 16.5 16"><rect x="0.7" y="0.7" width="14.8" height="11.6" rx="1" fill="#f6f6f6" stroke="#444" stroke-width="1.2"/><rect x="2.6" y="2.6" width="11" height="7.6" fill="#a9c0e6" stroke="#2d3a55" stroke-width="0.9"/><path d="M6 12.5 L5 15 H11.2 L10.2 12.5" fill="#ddd" stroke="#666" stroke-width="0.8"/></svg><svg style="left:1007px;top:1022.6px" width="5.2" height="3.2" viewBox="0 0 5.2 3.2"><path d="M0 0H5.2 L2.6 3.2 Z" fill="#222"/></svg><svg style="left:1019px;top:1016px" width="16.5" height="16.5" viewBox="0 0 16.5 16.5"><rect x="0.5" y="0.5" width="15.5" height="15.5" fill="#eef1f6" stroke="#333" stroke-width="1"/><path d="M0.5 10H16V16H0.5Z" fill="#c6cfe0"/><path d="M4.4 0.5V16 M8.25 0.5V16 M12.1 0.5V16 M0.5 4.4H16 M0.5 8.25H16 M0.5 12.1H16" stroke="#444" stroke-width="0.9"/></svg><svg style="left:1038px;top:1022.6px" width="5.2" height="3.2" viewBox="0 0 5.2 3.2"><path d="M0 0H5.2 L2.6 3.2 Z" fill="#222"/></svg><svg style="left:1050px;top:1017px" width="15.5" height="13.5" viewBox="0 0 15.5 13.5"><rect x="0.6" y="0.6" width="14.3" height="12.3" rx="1.2" fill="#a9c0e6" stroke="#2d4f9a" stroke-width="1.2"/><path d="M7.75 0.6V12.9 M0.6 6.75H14.9" stroke="#2d4f9a" stroke-width="1.3"/><path d="M2.6 2.8h3v1.8h-3z M9.8 2.8h3v1.8h-3z M2.6 8.8h3v1.8h-3z M9.8 8.8h3v1.8h-3z" fill="#c7d6f0"/></svg><svg style="left:1069px;top:1022.6px" width="5.2" height="3.2" viewBox="0 0 5.2 3.2"><path d="M0 0H5.2 L2.6 3.2 Z" fill="#222"/></svg><div style="left:0px;top:1040px;width:1920px;height:8px;background:#101010"></div><div style="left:538px;top:1040px;width:48px;height:8px;background:#99521b"></div><div style="left:636px;top:1040px;width:48px;height:8px;background:#333"></div><div style="left:1876px;top:1046.6px;width:4px;height:1.4px;background:#eee"></div><div style="left:1883px;top:1046.6px;width:5px;height:1.4px;background:#eee"></div><div style="left:1890px;top:1046.6px;width:5px;height:1.4px;background:#eee"></div><div style="left:1920px;top:0px;width:8px;height:1048px;background:#fff"></div><div style="left:1920.5px;top:-6px;width:14px;height:40px;background:#e9ebf1;border-radius:0 0 0 7px"></div><div style="left:1920px;top:70px;width:8px;height:1px;background:#e0e0e0"></div></div></body></html>
